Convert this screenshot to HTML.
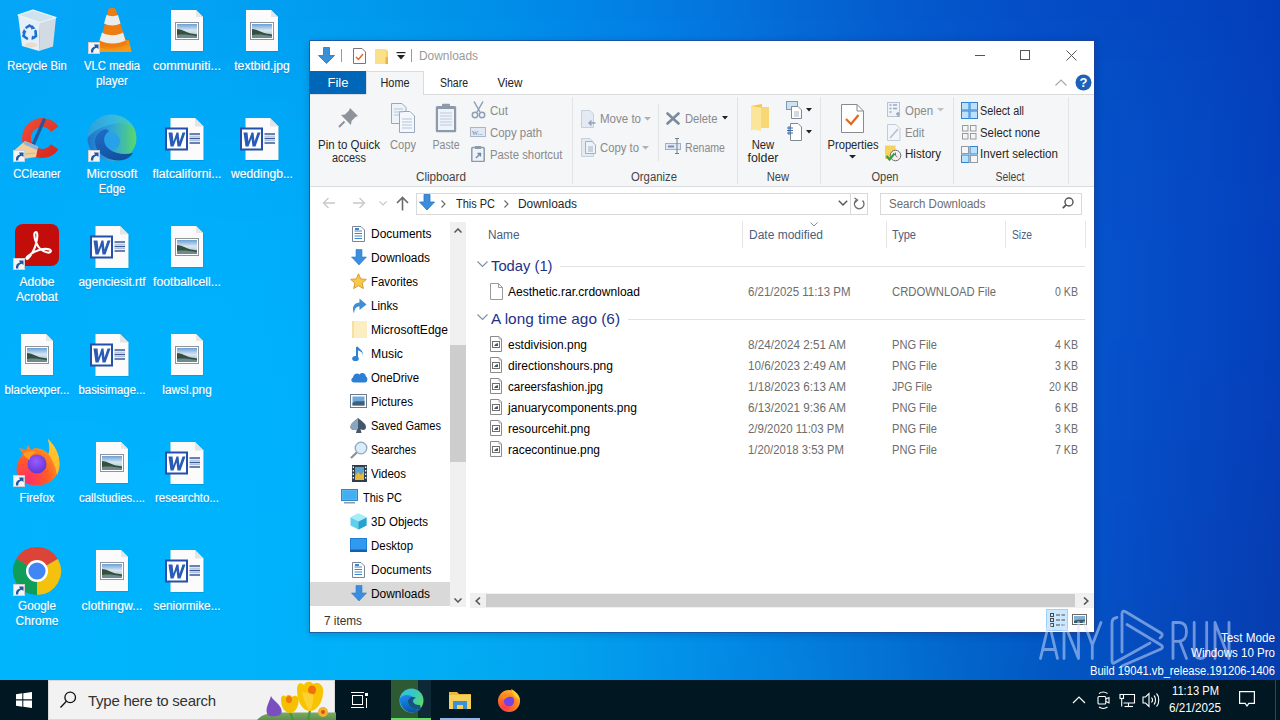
<!DOCTYPE html><html><head><meta charset="utf-8"><style>

html,body{margin:0;padding:0;}
body{width:1280px;height:720px;overflow:hidden;position:relative;font-family:"Liberation Sans", sans-serif;}
.a{position:absolute;}
.t{position:absolute;white-space:nowrap;}
.dl{color:#fff;text-shadow:0 0 1px rgba(255,255,255,.45),0 1px 1px rgba(0,40,90,.25);}

</style></head><body>
<div class="a" style="left:0px;top:0px;width:1280px;height:20px;background:linear-gradient(90deg,#05a5f7 0px,#04a5f7 80px,#03a4f5 160px,#02a0f2 240px,#019cef 320px,#0097eb 400px,#0090e9 480px,#0088e7 560px,#027ee3 640px,#0474dd 720px,#0468d4 800px,#045dce 880px,#0454ca 960px,#044dc6 1040px,#0349c3 1120px,#0344bf 1200px,#033dba 1280px);"></div>
<div class="a" style="left:0px;top:20px;width:1280px;height:20px;background:linear-gradient(90deg,#04a5f7 0px,#03a6f7 80px,#03a5f6 160px,#01a2f3 240px,#019ef0 320px,#0099ed 400px,#0092ea 480px,#0089e8 560px,#0280e5 640px,#0475de 720px,#0469d5 800px,#045ecf 880px,#0455cb 960px,#044ec7 1040px,#044ac3 1120px,#0345bf 1200px,#033eba 1280px);"></div>
<div class="a" style="left:0px;top:40px;width:1280px;height:20px;background:linear-gradient(90deg,#03a6f8 0px,#03a7f7 80px,#02a6f7 160px,#01a4f4 240px,#00a0f2 320px,#009aee 400px,#0093eb 480px,#008be9 560px,#0281e5 640px,#0477df 720px,#046bd6 800px,#045fd0 880px,#0456cb 960px,#0450c8 1040px,#044bc4 1120px,#0346c0 1200px,#033ebb 1280px);"></div>
<div class="a" style="left:0px;top:60px;width:1280px;height:20px;background:linear-gradient(90deg,#03a7f8 0px,#02a8f8 80px,#01a8f7 160px,#01a5f5 240px,#00a2f3 320px,#009cef 400px,#0095ed 480px,#008cea 560px,#0283e6 640px,#0478e0 720px,#046cd8 800px,#0461d1 880px,#0457cc 960px,#0451c8 1040px,#044dc5 1120px,#0447c0 1200px,#043ebb 1280px);"></div>
<div class="a" style="left:0px;top:80px;width:1280px;height:20px;background:linear-gradient(90deg,#02a8f8 0px,#01a9f8 80px,#00a9f8 160px,#00a7f6 240px,#00a4f4 320px,#009ef1 400px,#0096ee 480px,#008deb 560px,#0284e7 640px,#0479e1 720px,#046dd9 800px,#0462d2 880px,#0459cd 960px,#0452c9 1040px,#044ec5 1120px,#0447c1 1200px,#043fbb 1280px);"></div>
<div class="a" style="left:0px;top:100px;width:1280px;height:20px;background:linear-gradient(90deg,#02a8f8 0px,#01aaf8 80px,#00aaf8 160px,#00a9f7 240px,#00a5f5 320px,#009ff2 400px,#0097ef 480px,#008fec 560px,#0285e8 640px,#047ae1 720px,#046eda 800px,#0563d3 880px,#055ace 960px,#0453ca 1040px,#044ec6 1120px,#0448c1 1200px,#043fbb 1280px);"></div>
<div class="a" style="left:0px;top:120px;width:1280px;height:20px;background:linear-gradient(90deg,#02a9f9 0px,#00abf9 80px,#00abf9 160px,#00aaf8 240px,#00a6f6 320px,#00a0f3 400px,#0099f0 480px,#0090ed 560px,#0286e8 640px,#047be2 720px,#0470db 800px,#0565d4 880px,#055bcf 960px,#0554cb 1040px,#044fc7 1120px,#0448c2 1200px,#043fbb 1280px);"></div>
<div class="a" style="left:0px;top:140px;width:1280px;height:20px;background:linear-gradient(90deg,#01aaf9 0px,#00abf9 80px,#00acf9 160px,#00abf9 240px,#00a7f7 320px,#00a2f4 400px,#009af1 480px,#0191ed 560px,#0287e9 640px,#047ce3 720px,#0471dc 800px,#0566d6 880px,#055cd0 960px,#0555cc 1040px,#044fc7 1120px,#0448c2 1200px,#043fbc 1280px);"></div>
<div class="a" style="left:0px;top:160px;width:1280px;height:20px;background:linear-gradient(90deg,#01abfa 0px,#00acfa 80px,#00adfa 160px,#00acfa 240px,#00a9f8 320px,#00a3f5 400px,#009bf2 480px,#0192ee 560px,#0288ea 640px,#047de4 720px,#0472dd 800px,#0567d6 880px,#055ed1 960px,#0556cd 1040px,#0550c8 1120px,#0448c3 1200px,#043fbc 1280px);"></div>
<div class="a" style="left:0px;top:180px;width:1280px;height:20px;background:linear-gradient(90deg,#01acfa 0px,#00adfa 80px,#00aefa 160px,#00adfa 240px,#00a9f9 320px,#00a4f6 400px,#009cf2 480px,#0193ef 560px,#0289ea 640px,#047ee4 720px,#0473de 800px,#0568d7 880px,#055fd2 960px,#0557cd 1040px,#0550c9 1120px,#0548c3 1200px,#0440bc 1280px);"></div>
<div class="a" style="left:0px;top:200px;width:1280px;height:20px;background:linear-gradient(90deg,#01acfb 0px,#00aefb 80px,#00aefb 160px,#00adfb 240px,#00aaf9 320px,#00a5f6 400px,#009df3 480px,#0195ef 560px,#028beb 640px,#047fe5 720px,#0474de 800px,#0569d8 880px,#055fd3 960px,#0557ce 1040px,#0550c9 1120px,#0548c3 1200px,#0440bc 1280px);"></div>
<div class="a" style="left:0px;top:220px;width:1280px;height:20px;background:linear-gradient(90deg,#01adfb 0px,#00aefb 80px,#00affc 160px,#00aefb 240px,#00abfa 320px,#00a6f7 400px,#009ef4 480px,#0196f0 560px,#028beb 640px,#0480e5 720px,#0475df 800px,#056ad9 880px,#0560d4 960px,#0558cf 1040px,#0550ca 1120px,#0548c4 1200px,#043fbc 1280px);"></div>
<div class="a" style="left:0px;top:240px;width:1280px;height:20px;background:linear-gradient(90deg,#01aefb 0px,#00affc 80px,#00affc 160px,#00affc 240px,#00acfa 320px,#00a7f8 400px,#009ff4 480px,#0197f0 560px,#028cec 640px,#0481e6 720px,#0476e0 800px,#056bda 880px,#0561d4 960px,#0558cf 1040px,#0551ca 1120px,#0548c4 1200px,#043fbc 1280px);"></div>
<div class="a" style="left:0px;top:260px;width:1280px;height:20px;background:linear-gradient(90deg,#01aefc 0px,#00affc 80px,#00b0fc 160px,#00affc 240px,#00acfb 320px,#00a7f8 400px,#00a0f5 480px,#0197f1 560px,#028dec 640px,#0382e6 720px,#0477e0 800px,#056cda 880px,#0562d5 960px,#0559d0 1040px,#0551ca 1120px,#0548c4 1200px,#043fbb 1280px);"></div>
<div class="a" style="left:0px;top:280px;width:1280px;height:20px;background:linear-gradient(90deg,#01affc 0px,#00b0fc 80px,#00b0fd 160px,#00b0fd 240px,#00adfb 320px,#00a8f9 400px,#00a1f5 480px,#0198f1 560px,#028eec 640px,#0383e7 720px,#0478e1 800px,#056ddb 880px,#0562d5 960px,#0559d0 1040px,#0551ca 1120px,#0548c4 1200px,#043fbb 1280px);"></div>
<div class="a" style="left:0px;top:300px;width:1280px;height:20px;background:linear-gradient(90deg,#01affd 0px,#00b0fd 80px,#00b1fd 160px,#00b0fd 240px,#00aefb 320px,#00a9f9 400px,#01a2f5 480px,#0199f1 560px,#028fed 640px,#0384e7 720px,#0478e1 800px,#056ddb 880px,#0563d6 960px,#0559d0 1040px,#0551ca 1120px,#0548c4 1200px,#043fbb 1280px);"></div>
<div class="a" style="left:0px;top:320px;width:1280px;height:20px;background:linear-gradient(90deg,#01b0fd 0px,#00b0fd 80px,#00b1fe 160px,#00b1fd 240px,#00aefc 320px,#00a9f9 400px,#01a3f6 480px,#029af2 560px,#0290ed 640px,#0385e8 720px,#0479e2 800px,#056edc 880px,#0563d6 960px,#0559d0 1040px,#0551ca 1120px,#0548c3 1200px,#043fba 1280px);"></div>
<div class="a" style="left:0px;top:340px;width:1280px;height:20px;background:linear-gradient(90deg,#01b0fd 0px,#00b1fd 80px,#00b1fe 160px,#00b1fe 240px,#00affc 320px,#00aaf9 400px,#01a3f6 480px,#029bf2 560px,#0391ed 640px,#0386e8 720px,#047ae2 800px,#056edc 880px,#0563d6 960px,#055ad0 1040px,#0550ca 1120px,#0548c3 1200px,#043fba 1280px);"></div>
<div class="a" style="left:0px;top:360px;width:1280px;height:20px;background:linear-gradient(90deg,#01b0fe 0px,#00b1fe 80px,#00b2fe 160px,#00b1fe 240px,#00affc 320px,#00abf9 400px,#01a4f6 480px,#029cf2 560px,#0391ee 640px,#0386e8 720px,#047ae2 800px,#056fdc 880px,#0564d6 960px,#055ad0 1040px,#0550c9 1120px,#0547c2 1200px,#043eb9 1280px);"></div>
<div class="a" style="left:0px;top:380px;width:1280px;height:20px;background:linear-gradient(90deg,#01b0fe 0px,#01b1fe 80px,#00b2fe 160px,#00b2fe 240px,#00affc 320px,#00abfa 400px,#01a5f6 480px,#029cf2 560px,#0392ee 640px,#0387e8 720px,#047be2 800px,#046fdc 880px,#0564d6 960px,#055ad0 1040px,#0550c9 1120px,#0547c1 1200px,#053eb9 1280px);"></div>
<div class="a" style="left:0px;top:400px;width:1280px;height:20px;background:linear-gradient(90deg,#02b1fe 0px,#01b1fe 80px,#00b2fe 160px,#00b2fe 240px,#00b0fc 320px,#00acfa 400px,#01a5f6 480px,#029df2 560px,#0393ee 640px,#0387e9 720px,#047ce3 800px,#0470dc 880px,#0564d6 960px,#055ad0 1040px,#0550c8 1120px,#0547c0 1200px,#053eb8 1280px);"></div>
<div class="a" style="left:0px;top:420px;width:1280px;height:20px;background:linear-gradient(90deg,#02b1fe 0px,#01b2fe 80px,#00b2fe 160px,#00b2fe 240px,#00b0fc 320px,#01acfa 400px,#01a6f6 480px,#029ef2 560px,#0393ee 640px,#0388e9 720px,#047ce3 800px,#0470dc 880px,#0564d6 960px,#0559cf 1040px,#0550c8 1120px,#0547c0 1200px,#053eb7 1280px);"></div>
<div class="a" style="left:0px;top:440px;width:1280px;height:20px;background:linear-gradient(90deg,#02b1fe 0px,#01b2fe 80px,#00b2fe 160px,#00b2fe 240px,#00b0fc 320px,#01acf9 400px,#01a6f6 480px,#029ef2 560px,#0394ee 640px,#0389e9 720px,#047ce2 800px,#0470dc 880px,#0564d6 960px,#0559cf 1040px,#054fc7 1120px,#0546bf 1200px,#053eb7 1280px);"></div>
<div class="a" style="left:0px;top:460px;width:1280px;height:20px;background:linear-gradient(90deg,#02b1fe 0px,#01b2fe 80px,#00b3fe 160px,#00b2fe 240px,#00b1fc 320px,#01adf9 400px,#01a7f6 480px,#029ff2 560px,#0395ee 640px,#0389e9 720px,#047de2 800px,#0471dc 880px,#0464d5 960px,#0559cf 1040px,#054fc7 1120px,#0546be 1200px,#053eb6 1280px);"></div>
<div class="a" style="left:0px;top:480px;width:1280px;height:20px;background:linear-gradient(90deg,#02b2fe 0px,#01b2fe 80px,#00b3fe 160px,#00b3fe 240px,#00b1fc 320px,#01adf9 400px,#01a8f5 480px,#029ff2 560px,#0395ee 640px,#0389e9 720px,#047de2 800px,#0471db 880px,#0464d5 960px,#0559cf 1040px,#054fc7 1120px,#0546be 1200px,#053db5 1280px);"></div>
<div class="a" style="left:0px;top:500px;width:1280px;height:20px;background:linear-gradient(90deg,#02b2fe 0px,#01b2fe 80px,#00b3fe 160px,#00b3fd 240px,#00b1fc 320px,#01aef9 400px,#01a8f5 480px,#02a0f1 560px,#0296ee 640px,#038ae8 720px,#047ee2 800px,#0471db 880px,#0464d4 960px,#0559ce 1040px,#054ec7 1120px,#0546bd 1200px,#063db4 1280px);"></div>
<div class="a" style="left:0px;top:520px;width:1280px;height:20px;background:linear-gradient(90deg,#02b2fe 0px,#01b3fe 80px,#00b3fe 160px,#00b3fd 240px,#00b1fb 320px,#01aef8 400px,#01a9f5 480px,#02a1f1 560px,#0296ed 640px,#038ae8 720px,#037ee1 800px,#0471da 880px,#0465d3 960px,#0458cd 1040px,#054ec7 1120px,#0645bd 1200px,#063db4 1280px);"></div>
<div class="a" style="left:0px;top:540px;width:1280px;height:20px;background:linear-gradient(90deg,#02b2fe 0px,#01b3fe 80px,#00b3fd 160px,#00b3fd 240px,#00b1fb 320px,#01aef8 400px,#02a9f4 480px,#02a1f1 560px,#0296ed 640px,#038ae8 720px,#037ee1 800px,#0472d9 880px,#0465d2 960px,#0458cd 1040px,#054ec6 1120px,#0645bc 1200px,#063db3 1280px);"></div>
<div class="a" style="left:0px;top:560px;width:1280px;height:20px;background:linear-gradient(90deg,#02b3fe 0px,#01b3fd 80px,#00b3fd 160px,#00b3fc 240px,#00b1fb 320px,#01aef8 400px,#02a9f4 480px,#02a2f0 560px,#0297ed 640px,#038be8 720px,#037fe1 800px,#0372d9 880px,#0365d1 960px,#0458cc 1040px,#054ec5 1120px,#0645bb 1200px,#063db2 1280px);"></div>
<div class="a" style="left:0px;top:580px;width:1280px;height:20px;background:linear-gradient(90deg,#02b3fe 0px,#01b3fd 80px,#00b3fd 160px,#00b3fc 240px,#00b1fa 320px,#01aef7 400px,#02aaf3 480px,#02a2f0 560px,#0297ed 640px,#038be8 720px,#037fe0 800px,#0372d8 880px,#0365d0 960px,#0458ca 1040px,#054ec4 1120px,#0645ba 1200px,#063db1 1280px);"></div>
<div class="a" style="left:0px;top:600px;width:1280px;height:20px;background:linear-gradient(90deg,#02b4fe 0px,#01b4fd 80px,#00b4fc 160px,#00b3fc 240px,#00b1fa 320px,#01aff7 400px,#02aaf3 480px,#02a2ef 560px,#0297ec 640px,#028be7 720px,#037fdf 800px,#0372d7 880px,#0365cf 960px,#0358c9 1040px,#054ec2 1120px,#0645b9 1200px,#063db0 1280px);"></div>
<div class="a" style="left:0px;top:620px;width:1280px;height:20px;background:linear-gradient(90deg,#02b4fe 0px,#01b4fd 80px,#00b4fc 160px,#00b3fc 240px,#00b1fa 320px,#01aff6 400px,#02aaf2 480px,#02a3ee 560px,#0297ec 640px,#028be7 720px,#037fdf 800px,#0373d6 880px,#0265ce 960px,#0359c7 1040px,#044ec1 1120px,#0545b8 1200px,#063db0 1280px);"></div>
<div class="a" style="left:0px;top:640px;width:1280px;height:20px;background:linear-gradient(90deg,#01b5fd 0px,#01b4fc 80px,#00b4fc 160px,#00b3fb 240px,#00b1f9 320px,#01aff6 400px,#02aaf2 480px,#02a3ee 560px,#0297eb 640px,#028be7 720px,#037fde 800px,#0373d5 880px,#0265cc 960px,#0359c6 1040px,#044ec0 1120px,#0545b7 1200px,#063daf 1280px);"></div>
<div class="a" style="left:0px;top:660px;width:1280px;height:20px;background:linear-gradient(90deg,#01b5fd 0px,#00b5fc 80px,#00b4fb 160px,#00b3fb 240px,#00b1f9 320px,#01aff5 400px,#01aaf1 480px,#02a3ed 560px,#0297eb 640px,#028be6 720px,#0380dd 800px,#0373d4 880px,#0266cb 960px,#0259c4 1040px,#044fbe 1120px,#0546b6 1200px,#063dae 1280px);"></div>
<div class="a" style="left:0px;top:680px;width:1280px;height:20px;background:linear-gradient(90deg,#01b6fd 0px,#00b5fc 80px,#00b4fb 160px,#00b3fa 240px,#00b1f8 320px,#01aef5 400px,#01aaf1 480px,#02a2ed 560px,#0297ea 640px,#028be5 720px,#0280dd 800px,#0273d3 880px,#0266ca 960px,#025ac3 1040px,#044fbd 1120px,#0546b6 1200px,#063eae 1280px);"></div>
<div class="a" style="left:0px;top:700px;width:1280px;height:20px;background:linear-gradient(90deg,#01b6fd 0px,#00b5fc 80px,#00b4fb 160px,#00b3fa 240px,#00b1f8 320px,#01aef4 400px,#01aaf0 480px,#02a2ec 560px,#0297e9 640px,#028be4 720px,#0280dc 800px,#0273d2 880px,#0266ca 960px,#025ac2 1040px,#034fbc 1120px,#0546b5 1200px,#053ead 1280px);"></div>
<svg class="a" style="left:12px;top:5px" width="50" height="50" viewBox="0 0 50 50">
<path d="M6 10 L28 17.5 L27 46 L10 41Z" fill="#e4eff7"/>
<path d="M28 17.5 L44 12.5 L41 41.5 L27 46Z" fill="#d2dbe4"/>
<path d="M6 10 L21 5 L44 12.5 L28 17.5Z" fill="#cfe2ef" stroke="#eef7fc" stroke-width="1.3" stroke-linejoin="round"/>
<ellipse cx="19" cy="40" rx="6" ry="2.5" fill="#f3c9a6" opacity=".55"/>
<g fill="none" stroke="#1d6fd0" stroke-width="2.6" stroke-linecap="round">
<path d="M14.5 22.5 L17.5 20.5 L20.5 22.5"/><path d="M23.5 26 L24 31 L21 33"/><path d="M15 33.5 L11.5 31 L12.5 27"/>
</g>
<g fill="#1d6fd0"><path d="M20 20 L23.5 23.5 L19 24.5Z"/><path d="M19.5 35 L20 30.5 L23.5 33Z"/><path d="M10 28 L14.5 27 L12 24Z"/></g>
</svg>
<div class="t dl" style="left:-113px;width:300px;text-align:center;top:60.24px;font-size:12px;line-height:12px;color:#fff;transform:scaleX(0.9375);transform-origin:50% 0;">Recycle Bin</div>
<svg class="a" style="left:94px;top:7px" width="40" height="48" viewBox="0 0 40 48">
<defs><linearGradient id="vb" x1="0" y1="0" x2="1" y2="1"><stop offset="0" stop-color="#e8700a"/><stop offset="1" stop-color="#f6a21a"/></linearGradient></defs>
<path d="M5 33 H35 L37.5 45 H2Z" fill="url(#vb)"/>
<path d="M4 39 C10 44 30 44 36 39 L37.5 45 H2Z" fill="#f39a1c"/>
<path d="M14.5 2 C16 0.8 20 0.8 21.5 2 L33 37 C27 41.5 12 41.5 6 37Z" fill="#ee7d10"/>
<path d="M12.5 8 C16 9.5 21 9.5 24 8 L26.5 16.5 C21.5 19 15 19 10 16.5Z" fill="#ececec"/>
<path d="M8 25.5 C14 29 23 29 29 25.5 L31.5 33.5 C24 37.5 13 37.5 5.5 33.5Z" fill="#ececec"/>
</svg>
<svg class="a" style="left:88px;top:42px" width="12" height="12" viewBox="0 0 12 12"><rect x="0" y="0" width="12" height="12" fill="#f4f4f4"/><rect x="0.5" y="0.5" width="11" height="11" fill="none" stroke="#d0d0d0"/><path d="M3 10.5 C2.5 7 4 5 7 4.5 L6 2.5 L10.5 2.5 L10.5 7 L8.8 5.8 C6.5 6.3 5 8 5.2 10.5Z" fill="#1f58a8"/></svg>
<div class="t dl" style="left:-38px;width:300px;text-align:center;top:60.24px;font-size:12px;line-height:12px;color:#fff;transform:scaleX(0.9432);transform-origin:50% 0;">VLC media</div>
<div class="t dl" style="left:-38px;width:300px;text-align:center;top:75.24px;font-size:12px;line-height:12px;color:#fff;transform:scaleX(0.9790);transform-origin:50% 0;">player</div>
<svg class="a" style="left:170px;top:9px" width="35" height="44" viewBox="0 0 35 44">
<path d="M1 1 H26 L33 8 V42 H1Z" fill="#000" opacity=".12" transform="translate(0.6,0.8)"/>
<path d="M1 1 H26 L33 8 V42 H1Z" fill="#fbfbfb"/>
<path d="M26 1 V8 H33Z" fill="#e6e6e6"/>
<rect x="5.5" y="13.5" width="23" height="17" fill="#fff" stroke="#8e9499"/>
<defs><linearGradient id="pg" x1="0" y1="0" x2="0" y2="1"><stop offset="0" stop-color="#6a9fd6"/><stop offset=".45" stop-color="#d7e6f2"/><stop offset="1" stop-color="#9fb7c4"/></linearGradient></defs>
<rect x="7" y="15" width="20" height="14" fill="url(#pg)"/>
<path d="M7 20 C11 20 16 23 21 24.5 C24 25 26 25 27 25.5 V29 H7Z" fill="#34503a"/>
<path d="M7 26 C12 25 20 26 27 27 V29 H7Z" fill="#6d8a92"/>
</svg>
<div class="t dl" style="left:37px;width:300px;text-align:center;top:60.24px;font-size:12px;line-height:12px;color:#fff;transform:scaleX(1.0512);transform-origin:50% 0;">communiti...</div>
<svg class="a" style="left:245px;top:9px" width="35" height="44" viewBox="0 0 35 44">
<path d="M1 1 H26 L33 8 V42 H1Z" fill="#000" opacity=".12" transform="translate(0.6,0.8)"/>
<path d="M1 1 H26 L33 8 V42 H1Z" fill="#fbfbfb"/>
<path d="M26 1 V8 H33Z" fill="#e6e6e6"/>
<rect x="5.5" y="13.5" width="23" height="17" fill="#fff" stroke="#8e9499"/>
<defs><linearGradient id="pg" x1="0" y1="0" x2="0" y2="1"><stop offset="0" stop-color="#6a9fd6"/><stop offset=".45" stop-color="#d7e6f2"/><stop offset="1" stop-color="#9fb7c4"/></linearGradient></defs>
<rect x="7" y="15" width="20" height="14" fill="url(#pg)"/>
<path d="M7 20 C11 20 16 23 21 24.5 C24 25 26 25 27 25.5 V29 H7Z" fill="#34503a"/>
<path d="M7 26 C12 25 20 26 27 27 V29 H7Z" fill="#6d8a92"/>
</svg>
<div class="t dl" style="left:112px;width:300px;text-align:center;top:60.24px;font-size:12px;line-height:12px;color:#fff;transform:scaleX(1.0146);transform-origin:50% 0;">textbid.jpg</div>
<svg class="a" style="left:13px;top:113px" width="50" height="50" viewBox="0 0 50 50">
<defs><linearGradient id="cc" x1="0" y1="0" x2="1" y2="1"><stop offset="0" stop-color="#f0503a"/><stop offset="1" stop-color="#d3231c"/></linearGradient></defs>
<path d="M45.4 13.5 A20 20 0 1 0 45.4 36.5 L38 31.3 A11 11 0 1 1 38 18.7 Z" fill="url(#cc)"/>
<path d="M31 7 L20.5 31" stroke="#24589e" stroke-width="3.2" stroke-linecap="round"/>
<path d="M0.5 38 L12 28 L25 33.5 L23 44 L6 46.5Z" fill="#f1cf9c"/>
<path d="M12 28 L25 33.5 L23.5 37 L10.5 31Z" fill="#8fb5d8"/>
<path d="M4 42 L22 40" stroke="#e2b27c" stroke-width="1.2"/>
</svg>
<svg class="a" style="left:13px;top:150px" width="12" height="12" viewBox="0 0 12 12"><rect x="0" y="0" width="12" height="12" fill="#f4f4f4"/><rect x="0.5" y="0.5" width="11" height="11" fill="none" stroke="#d0d0d0"/><path d="M3 10.5 C2.5 7 4 5 7 4.5 L6 2.5 L10.5 2.5 L10.5 7 L8.8 5.8 C6.5 6.3 5 8 5.2 10.5Z" fill="#1f58a8"/></svg>
<div class="t dl" style="left:-113px;width:300px;text-align:center;top:168.24px;font-size:12px;line-height:12px;color:#fff;transform:scaleX(0.9368);transform-origin:50% 0;">CCleaner</div>
<svg class="a" style="left:87px;top:114px" width="50" height="48" viewBox="0 0 50 48">
<defs><linearGradient id="e1" x1="0" y1="0" x2="1" y2="0"><stop offset="0" stop-color="#1e74cc"/><stop offset=".5" stop-color="#2fa6dc"/><stop offset="1" stop-color="#5ad868"/></linearGradient>
<linearGradient id="e2" x1="0" y1="0" x2="0.6" y2="1"><stop offset="0" stop-color="#1f6fc8"/><stop offset="1" stop-color="#134f9e"/></linearGradient></defs>
<ellipse cx="25" cy="24" rx="24.5" ry="23.5" fill="url(#e1)"/>
<path d="M0.5 24 C0.5 12 10 1 24 0.5 C34 0.5 43 6 47 14 C40 9 30 8 22 11 C12 14 4 19 0.5 24Z" fill="#3cc4e6" opacity=".55"/>
<path d="M14 31 C14 22 20 18 26 19 C30 20 33 23 33 27 C33 33 28 37 22 36 C18 35.5 15 34 14 31Z" fill="#27a2ea"/>
<path d="M19 15 C10 17 6 25 9 33 C13 43 26 48 36 46 C41 45 44 42 46 39 C38 41 28 40 22 35 C16 30 15 22 22 17Z" fill="url(#e2)"/>
</svg>
<svg class="a" style="left:88px;top:150px" width="12" height="12" viewBox="0 0 12 12"><rect x="0" y="0" width="12" height="12" fill="#f4f4f4"/><rect x="0.5" y="0.5" width="11" height="11" fill="none" stroke="#d0d0d0"/><path d="M3 10.5 C2.5 7 4 5 7 4.5 L6 2.5 L10.5 2.5 L10.5 7 L8.8 5.8 C6.5 6.3 5 8 5.2 10.5Z" fill="#1f58a8"/></svg>
<div class="t dl" style="left:-38px;width:300px;text-align:center;top:168.24px;font-size:12px;line-height:12px;color:#fff;transform:scaleX(1.0475);transform-origin:50% 0;">Microsoft</div>
<div class="t dl" style="left:-38px;width:300px;text-align:center;top:183.24px;font-size:12px;line-height:12px;color:#fff;transform:scaleX(0.9454);transform-origin:50% 0;">Edge</div>
<svg class="a" style="left:165px;top:117px" width="40" height="45" viewBox="0 0 40 45">
<path d="M5.5 1 H30 L38.5 9.5 V43 H5.5Z" fill="#000" opacity=".12" transform="translate(0.6,0.8)"/>
<path d="M5.5 1 H30 L38.5 9.5 V43 H5.5Z" fill="#fbfbfb"/>
<path d="M30 1 V9.5 H38.5Z" fill="#e4e4e4"/>
<rect x="1" y="11.5" width="21" height="21" fill="#fff" stroke="#2350a8" stroke-width="2"/>
<path d="M3.5 15.5 H7.5 L8.5 24.5 L11.5 15.5 H13.5 L14.5 24.5 L17.5 15.5 H20.5 L15.5 29.5 H12.5 L11.5 21.5 L8.5 29.5 H5.5Z" fill="#2a5bb6"/>
<path d="M24.5 17 H35 M24.5 21.5 H35 M24.5 26 H35" stroke="#3a5a9a" stroke-width="1.3"/>
<path d="M24.5 19.2 H35 M24.5 23.7 H35" stroke="#9db0d0" stroke-width="1"/>
</svg>
<div class="t dl" style="left:37px;width:300px;text-align:center;top:168.24px;font-size:12px;line-height:12px;color:#fff;transform:scaleX(1.0244);transform-origin:50% 0;">flatcaliforni...</div>
<svg class="a" style="left:240px;top:117px" width="40" height="45" viewBox="0 0 40 45">
<path d="M5.5 1 H30 L38.5 9.5 V43 H5.5Z" fill="#000" opacity=".12" transform="translate(0.6,0.8)"/>
<path d="M5.5 1 H30 L38.5 9.5 V43 H5.5Z" fill="#fbfbfb"/>
<path d="M30 1 V9.5 H38.5Z" fill="#e4e4e4"/>
<rect x="1" y="11.5" width="21" height="21" fill="#fff" stroke="#2350a8" stroke-width="2"/>
<path d="M3.5 15.5 H7.5 L8.5 24.5 L11.5 15.5 H13.5 L14.5 24.5 L17.5 15.5 H20.5 L15.5 29.5 H12.5 L11.5 21.5 L8.5 29.5 H5.5Z" fill="#2a5bb6"/>
<path d="M24.5 17 H35 M24.5 21.5 H35 M24.5 26 H35" stroke="#3a5a9a" stroke-width="1.3"/>
<path d="M24.5 19.2 H35 M24.5 23.7 H35" stroke="#9db0d0" stroke-width="1"/>
</svg>
<div class="t dl" style="left:112px;width:300px;text-align:center;top:168.24px;font-size:12px;line-height:12px;color:#fff;transform:scaleX(1.0099);transform-origin:50% 0;">weddingb...</div>
<svg class="a" style="left:15px;top:224px" width="44" height="42" viewBox="0 0 44 42">
<rect x="0" y="0" width="44" height="42" rx="8" fill="#c20d0a"/>
<path d="M21 8 C18.5 8 19 13.5 21 18 C23 23.5 27 27.5 32.5 28.5 C36 29 37 26.5 34.5 25.5 C29.5 23.5 19 26.5 12.5 32.5 C10.5 34.5 11.5 36 13.5 34 C18 29 21 21.5 22 15 C22.8 10 22 8 21 8Z" fill="none" stroke="#fff" stroke-width="2.1" stroke-linejoin="round"/>
</svg>
<svg class="a" style="left:13px;top:258px" width="12" height="12" viewBox="0 0 12 12"><rect x="0" y="0" width="12" height="12" fill="#f4f4f4"/><rect x="0.5" y="0.5" width="11" height="11" fill="none" stroke="#d0d0d0"/><path d="M3 10.5 C2.5 7 4 5 7 4.5 L6 2.5 L10.5 2.5 L10.5 7 L8.8 5.8 C6.5 6.3 5 8 5.2 10.5Z" fill="#1f58a8"/></svg>
<div class="t dl" style="left:-113px;width:300px;text-align:center;top:276.44px;font-size:12px;line-height:12px;color:#fff;transform:scaleX(1.0086);transform-origin:50% 0;">Adobe</div>
<div class="t dl" style="left:-113px;width:300px;text-align:center;top:291.44px;font-size:12px;line-height:12px;color:#fff;transform:scaleX(1.0155);transform-origin:50% 0;">Acrobat</div>
<svg class="a" style="left:90px;top:225px" width="40" height="45" viewBox="0 0 40 45">
<path d="M5.5 1 H30 L38.5 9.5 V43 H5.5Z" fill="#000" opacity=".12" transform="translate(0.6,0.8)"/>
<path d="M5.5 1 H30 L38.5 9.5 V43 H5.5Z" fill="#fbfbfb"/>
<path d="M30 1 V9.5 H38.5Z" fill="#e4e4e4"/>
<rect x="1" y="11.5" width="21" height="21" fill="#fff" stroke="#2350a8" stroke-width="2"/>
<path d="M3.5 15.5 H7.5 L8.5 24.5 L11.5 15.5 H13.5 L14.5 24.5 L17.5 15.5 H20.5 L15.5 29.5 H12.5 L11.5 21.5 L8.5 29.5 H5.5Z" fill="#2a5bb6"/>
<path d="M24.5 17 H35 M24.5 21.5 H35 M24.5 26 H35" stroke="#3a5a9a" stroke-width="1.3"/>
<path d="M24.5 19.2 H35 M24.5 23.7 H35" stroke="#9db0d0" stroke-width="1"/>
</svg>
<div class="t dl" style="left:-38px;width:300px;text-align:center;top:276.44px;font-size:12px;line-height:12px;color:#fff;transform:scaleX(0.9846);transform-origin:50% 0;">agenciesit.rtf</div>
<svg class="a" style="left:170px;top:225px" width="35" height="44" viewBox="0 0 35 44">
<path d="M1 1 H26 L33 8 V42 H1Z" fill="#000" opacity=".12" transform="translate(0.6,0.8)"/>
<path d="M1 1 H26 L33 8 V42 H1Z" fill="#fbfbfb"/>
<path d="M26 1 V8 H33Z" fill="#e6e6e6"/>
<rect x="5.5" y="13.5" width="23" height="17" fill="#fff" stroke="#8e9499"/>
<defs><linearGradient id="pg" x1="0" y1="0" x2="0" y2="1"><stop offset="0" stop-color="#6a9fd6"/><stop offset=".45" stop-color="#d7e6f2"/><stop offset="1" stop-color="#9fb7c4"/></linearGradient></defs>
<rect x="7" y="15" width="20" height="14" fill="url(#pg)"/>
<path d="M7 20 C11 20 16 23 21 24.5 C24 25 26 25 27 25.5 V29 H7Z" fill="#34503a"/>
<path d="M7 26 C12 25 20 26 27 27 V29 H7Z" fill="#6d8a92"/>
</svg>
<div class="t dl" style="left:37px;width:300px;text-align:center;top:276.44px;font-size:12px;line-height:12px;color:#fff;transform:scaleX(1.0194);transform-origin:50% 0;">footballcell...</div>
<svg class="a" style="left:20px;top:333px" width="35" height="44" viewBox="0 0 35 44">
<path d="M1 1 H26 L33 8 V42 H1Z" fill="#000" opacity=".12" transform="translate(0.6,0.8)"/>
<path d="M1 1 H26 L33 8 V42 H1Z" fill="#fbfbfb"/>
<path d="M26 1 V8 H33Z" fill="#e6e6e6"/>
<rect x="5.5" y="13.5" width="23" height="17" fill="#fff" stroke="#8e9499"/>
<defs><linearGradient id="pg" x1="0" y1="0" x2="0" y2="1"><stop offset="0" stop-color="#6a9fd6"/><stop offset=".45" stop-color="#d7e6f2"/><stop offset="1" stop-color="#9fb7c4"/></linearGradient></defs>
<rect x="7" y="15" width="20" height="14" fill="url(#pg)"/>
<path d="M7 20 C11 20 16 23 21 24.5 C24 25 26 25 27 25.5 V29 H7Z" fill="#34503a"/>
<path d="M7 26 C12 25 20 26 27 27 V29 H7Z" fill="#6d8a92"/>
</svg>
<div class="t dl" style="left:-113px;width:300px;text-align:center;top:384.44px;font-size:12px;line-height:12px;color:#fff;transform:scaleX(0.9647);transform-origin:50% 0;">blackexper...</div>
<svg class="a" style="left:90px;top:333px" width="40" height="45" viewBox="0 0 40 45">
<path d="M5.5 1 H30 L38.5 9.5 V43 H5.5Z" fill="#000" opacity=".12" transform="translate(0.6,0.8)"/>
<path d="M5.5 1 H30 L38.5 9.5 V43 H5.5Z" fill="#fbfbfb"/>
<path d="M30 1 V9.5 H38.5Z" fill="#e4e4e4"/>
<rect x="1" y="11.5" width="21" height="21" fill="#fff" stroke="#2350a8" stroke-width="2"/>
<path d="M3.5 15.5 H7.5 L8.5 24.5 L11.5 15.5 H13.5 L14.5 24.5 L17.5 15.5 H20.5 L15.5 29.5 H12.5 L11.5 21.5 L8.5 29.5 H5.5Z" fill="#2a5bb6"/>
<path d="M24.5 17 H35 M24.5 21.5 H35 M24.5 26 H35" stroke="#3a5a9a" stroke-width="1.3"/>
<path d="M24.5 19.2 H35 M24.5 23.7 H35" stroke="#9db0d0" stroke-width="1"/>
</svg>
<div class="t dl" style="left:-38px;width:300px;text-align:center;top:384.44px;font-size:12px;line-height:12px;color:#fff;transform:scaleX(0.9476);transform-origin:50% 0;">basisimage...</div>
<svg class="a" style="left:170px;top:333px" width="35" height="44" viewBox="0 0 35 44">
<path d="M1 1 H26 L33 8 V42 H1Z" fill="#000" opacity=".12" transform="translate(0.6,0.8)"/>
<path d="M1 1 H26 L33 8 V42 H1Z" fill="#fbfbfb"/>
<path d="M26 1 V8 H33Z" fill="#e6e6e6"/>
<rect x="5.5" y="13.5" width="23" height="17" fill="#fff" stroke="#8e9499"/>
<defs><linearGradient id="pg" x1="0" y1="0" x2="0" y2="1"><stop offset="0" stop-color="#6a9fd6"/><stop offset=".45" stop-color="#d7e6f2"/><stop offset="1" stop-color="#9fb7c4"/></linearGradient></defs>
<rect x="7" y="15" width="20" height="14" fill="url(#pg)"/>
<path d="M7 20 C11 20 16 23 21 24.5 C24 25 26 25 27 25.5 V29 H7Z" fill="#34503a"/>
<path d="M7 26 C12 25 20 26 27 27 V29 H7Z" fill="#6d8a92"/>
</svg>
<div class="t dl" style="left:37px;width:300px;text-align:center;top:384.44px;font-size:12px;line-height:12px;color:#fff;transform:scaleX(0.9894);transform-origin:50% 0;">lawsl.png</div>
<svg class="a" style="left:13px;top:437px" width="48" height="50" viewBox="0 0 48 50">
<defs><radialGradient id="f1" cx="0.25" cy="0.9" r="1.05"><stop offset="0" stop-color="#ff2d6a"/><stop offset=".45" stop-color="#ff5a28"/><stop offset=".8" stop-color="#ff9a1e"/><stop offset="1" stop-color="#ffd83a"/></radialGradient>
<radialGradient id="f2" cx="0.45" cy="0.35" r="0.75"><stop offset="0" stop-color="#9a5cff"/><stop offset="1" stop-color="#5a2fd0"/></radialGradient></defs>
<path d="M6 11 L10 17 C5 23 2.5 29 4 36 C7 45 15 48.5 24 48.5 C37 48.5 46.5 39 46.5 27 C46.5 17 42 9 35 2 C36.5 8 37 13 35.5 17 C32 13 27 11 22 11 L18.5 13 L15 8.5 L13 13Z" fill="url(#f1)"/>
<path d="M35 2 C42 9 46.5 17 46.5 27 C46.5 31 45.5 35 44 38 C43 30 40 24 35.5 17 C37 13 36.5 8 35 2Z" fill="#ffc82e" opacity=".85"/>
<circle cx="24" cy="27" r="9.5" fill="url(#f2)"/>
<path d="M10 17 C13 14 19 13 23 15.5 C19 17 17 19.5 16.5 23 C14 21.5 11.5 19.5 10 17Z" fill="#ff9a22"/>
</svg>
<svg class="a" style="left:13px;top:475px" width="12" height="12" viewBox="0 0 12 12"><rect x="0" y="0" width="12" height="12" fill="#f4f4f4"/><rect x="0.5" y="0.5" width="11" height="11" fill="none" stroke="#d0d0d0"/><path d="M3 10.5 C2.5 7 4 5 7 4.5 L6 2.5 L10.5 2.5 L10.5 7 L8.8 5.8 C6.5 6.3 5 8 5.2 10.5Z" fill="#1f58a8"/></svg>
<div class="t dl" style="left:-113px;width:300px;text-align:center;top:492.44px;font-size:12px;line-height:12px;color:#fff;transform:scaleX(0.9540);transform-origin:50% 0;">Firefox</div>
<svg class="a" style="left:95px;top:441px" width="35" height="44" viewBox="0 0 35 44">
<path d="M1 1 H26 L33 8 V42 H1Z" fill="#000" opacity=".12" transform="translate(0.6,0.8)"/>
<path d="M1 1 H26 L33 8 V42 H1Z" fill="#fbfbfb"/>
<path d="M26 1 V8 H33Z" fill="#e6e6e6"/>
<rect x="5.5" y="13.5" width="23" height="17" fill="#fff" stroke="#8e9499"/>
<defs><linearGradient id="pg" x1="0" y1="0" x2="0" y2="1"><stop offset="0" stop-color="#6a9fd6"/><stop offset=".45" stop-color="#d7e6f2"/><stop offset="1" stop-color="#9fb7c4"/></linearGradient></defs>
<rect x="7" y="15" width="20" height="14" fill="url(#pg)"/>
<path d="M7 20 C11 20 16 23 21 24.5 C24 25 26 25 27 25.5 V29 H7Z" fill="#34503a"/>
<path d="M7 26 C12 25 20 26 27 27 V29 H7Z" fill="#6d8a92"/>
</svg>
<div class="t dl" style="left:-38px;width:300px;text-align:center;top:492.44px;font-size:12px;line-height:12px;color:#fff;transform:scaleX(0.9514);transform-origin:50% 0;">callstudies....</div>
<svg class="a" style="left:165px;top:441px" width="40" height="45" viewBox="0 0 40 45">
<path d="M5.5 1 H30 L38.5 9.5 V43 H5.5Z" fill="#000" opacity=".12" transform="translate(0.6,0.8)"/>
<path d="M5.5 1 H30 L38.5 9.5 V43 H5.5Z" fill="#fbfbfb"/>
<path d="M30 1 V9.5 H38.5Z" fill="#e4e4e4"/>
<rect x="1" y="11.5" width="21" height="21" fill="#fff" stroke="#2350a8" stroke-width="2"/>
<path d="M3.5 15.5 H7.5 L8.5 24.5 L11.5 15.5 H13.5 L14.5 24.5 L17.5 15.5 H20.5 L15.5 29.5 H12.5 L11.5 21.5 L8.5 29.5 H5.5Z" fill="#2a5bb6"/>
<path d="M24.5 17 H35 M24.5 21.5 H35 M24.5 26 H35" stroke="#3a5a9a" stroke-width="1.3"/>
<path d="M24.5 19.2 H35 M24.5 23.7 H35" stroke="#9db0d0" stroke-width="1"/>
</svg>
<div class="t dl" style="left:37px;width:300px;text-align:center;top:492.44px;font-size:12px;line-height:12px;color:#fff;transform:scaleX(0.9595);transform-origin:50% 0;">researchto...</div>
<svg class="a" style="left:12px;top:546px" width="50" height="50" viewBox="0 0 50 50">
<path d="M25 25 L4.2 13 A24 24 0 0 1 45.8 13Z" fill="#db4437"/>
<path d="M25 25 L45.8 13 A24 24 0 0 1 25 49Z" fill="#f4c20d"/>
<path d="M25 25 L25 49 A24 24 0 0 1 4.2 13Z" fill="#0f9d58"/>
<circle cx="25" cy="25" r="11" fill="#fff"/>
<circle cx="25" cy="25" r="8.6" fill="#4285f4"/>
</svg>
<svg class="a" style="left:13px;top:584px" width="12" height="12" viewBox="0 0 12 12"><rect x="0" y="0" width="12" height="12" fill="#f4f4f4"/><rect x="0.5" y="0.5" width="11" height="11" fill="none" stroke="#d0d0d0"/><path d="M3 10.5 C2.5 7 4 5 7 4.5 L6 2.5 L10.5 2.5 L10.5 7 L8.8 5.8 C6.5 6.3 5 8 5.2 10.5Z" fill="#1f58a8"/></svg>
<div class="t dl" style="left:-113px;width:300px;text-align:center;top:600.44px;font-size:12px;line-height:12px;color:#fff;transform:scaleX(0.9818);transform-origin:50% 0;">Google</div>
<div class="t dl" style="left:-113px;width:300px;text-align:center;top:615.44px;font-size:12px;line-height:12px;color:#fff;transform:scaleX(1.0073);transform-origin:50% 0;">Chrome</div>
<svg class="a" style="left:95px;top:549px" width="35" height="44" viewBox="0 0 35 44">
<path d="M1 1 H26 L33 8 V42 H1Z" fill="#000" opacity=".12" transform="translate(0.6,0.8)"/>
<path d="M1 1 H26 L33 8 V42 H1Z" fill="#fbfbfb"/>
<path d="M26 1 V8 H33Z" fill="#e6e6e6"/>
<rect x="5.5" y="13.5" width="23" height="17" fill="#fff" stroke="#8e9499"/>
<defs><linearGradient id="pg" x1="0" y1="0" x2="0" y2="1"><stop offset="0" stop-color="#6a9fd6"/><stop offset=".45" stop-color="#d7e6f2"/><stop offset="1" stop-color="#9fb7c4"/></linearGradient></defs>
<rect x="7" y="15" width="20" height="14" fill="url(#pg)"/>
<path d="M7 20 C11 20 16 23 21 24.5 C24 25 26 25 27 25.5 V29 H7Z" fill="#34503a"/>
<path d="M7 26 C12 25 20 26 27 27 V29 H7Z" fill="#6d8a92"/>
</svg>
<div class="t dl" style="left:-38px;width:300px;text-align:center;top:600.44px;font-size:12px;line-height:12px;color:#fff;transform:scaleX(1.0274);transform-origin:50% 0;">clothingw...</div>
<svg class="a" style="left:165px;top:549px" width="40" height="45" viewBox="0 0 40 45">
<path d="M5.5 1 H30 L38.5 9.5 V43 H5.5Z" fill="#000" opacity=".12" transform="translate(0.6,0.8)"/>
<path d="M5.5 1 H30 L38.5 9.5 V43 H5.5Z" fill="#fbfbfb"/>
<path d="M30 1 V9.5 H38.5Z" fill="#e4e4e4"/>
<rect x="1" y="11.5" width="21" height="21" fill="#fff" stroke="#2350a8" stroke-width="2"/>
<path d="M3.5 15.5 H7.5 L8.5 24.5 L11.5 15.5 H13.5 L14.5 24.5 L17.5 15.5 H20.5 L15.5 29.5 H12.5 L11.5 21.5 L8.5 29.5 H5.5Z" fill="#2a5bb6"/>
<path d="M24.5 17 H35 M24.5 21.5 H35 M24.5 26 H35" stroke="#3a5a9a" stroke-width="1.3"/>
<path d="M24.5 19.2 H35 M24.5 23.7 H35" stroke="#9db0d0" stroke-width="1"/>
</svg>
<div class="t dl" style="left:37px;width:300px;text-align:center;top:600.44px;font-size:12px;line-height:12px;color:#fff;transform:scaleX(0.9848);transform-origin:50% 0;">seniormike...</div>
<div class="a" style="left:309px;top:40px;width:786px;height:593px;box-shadow:0 2px 8px rgba(0,20,50,.2);"></div>
<div class="a" style="left:310px;top:41px;width:784px;height:591px;background:#fff;"></div>
<div class="a" style="left:309px;top:40px;width:786px;height:593px;box-sizing:border-box;border:1px solid rgba(37,62,138,.7);"></div>
<svg class="a" style="left:318px;top:47px" width="17" height="17" viewBox="0 0 17 17"><path d="M5.5 0.5 H11.5 V8.5 H16.5 L8.5 16.5 L0.5 8.5 H5.5Z" fill="#3a8fd9" stroke="#2a6fb8" stroke-width="0.8"/></svg>
<div class="a" style="left:341px;top:49px;width:1px;height:13px;background:#9a9a9a;"></div>
<svg class="a" style="left:353px;top:48px" width="13" height="16" viewBox="0 0 13 16"><path d="M0.5 0.5 H9 L12.5 4 V15.5 H0.5Z" fill="#fff" stroke="#777" stroke-width="1"/><path d="M3 9 L5.5 11.5 L10 6" fill="none" stroke="#e06a2a" stroke-width="1.5"/></svg>
<svg class="a" style="left:375px;top:48px" width="14" height="17" viewBox="0 0 14 17"><path d="M0 1 H10 L13 3 V16 H0Z" fill="#f8d46a"/><rect x="0" y="1" width="11" height="15" fill="#fbe08a"/><rect x="10.5" y="9" width="2.5" height="7" fill="#e6b640"/></svg>
<svg class="a" style="left:396px;top:52px" width="10" height="8" viewBox="0 0 10 8"><rect x="0.5" y="0" width="9" height="1.2" fill="#222"/><path d="M1 3 H9 L5 7.5Z" fill="#222"/></svg>
<div class="a" style="left:411px;top:49px;width:1px;height:13px;background:#9a9a9a;"></div>
<div class="t " style="left:419px;top:49.84px;font-size:12px;line-height:12px;color:#9a9a9a;transform:scaleX(0.9937);transform-origin:0 0;">Downloads</div>
<div class="a" style="left:975px;top:55px;width:10px;height:1px;background:#555;"></div>
<div class="a" style="left:1020px;top:50px;width:10px;height:10px;box-sizing:border-box;border:1px solid #555;"></div>
<svg class="a" style="left:1066px;top:50px" width="11" height="11" viewBox="0 0 11 11"><path d="M0.5 0.5 L10.5 10.5 M10.5 0.5 L0.5 10.5" stroke="#555" stroke-width="1"/></svg>
<div class="a" style="left:310px;top:71px;width:56px;height:23px;background:#0066b8;"></div>
<div class="t " style="left:188px;width:300px;text-align:center;top:76.84px;font-size:12px;line-height:12px;color:#fff;transform:scaleX(1.0856);transform-origin:50% 0;">File</div>
<div class="a" style="left:366px;top:71px;width:58px;height:24px;background:#f4f6f8;box-sizing:border-box;border:1px solid #dadbdc;border-bottom:none;"></div>
<div class="t " style="left:245px;width:300px;text-align:center;top:76.84px;font-size:12px;line-height:12px;color:#222;transform:scaleX(0.9058);transform-origin:50% 0;">Home</div>
<div class="t " style="left:304px;width:300px;text-align:center;top:76.84px;font-size:12px;line-height:12px;color:#222;transform:scaleX(0.8741);transform-origin:50% 0;">Share</div>
<div class="t " style="left:360px;width:300px;text-align:center;top:76.84px;font-size:12px;line-height:12px;color:#222;transform:scaleX(0.9691);transform-origin:50% 0;">View</div>
<svg class="a" style="left:1055px;top:79px" width="12" height="7" viewBox="0 0 12 7"><path d="M0.5 6.5 L6 1 L11.5 6.5" fill="none" stroke="#a8a8a8" stroke-width="1.2"/></svg>
<svg class="a" style="left:1075px;top:74px" width="17" height="17" viewBox="0 0 17 17"><circle cx="8.5" cy="8.5" r="8" fill="#1b62b8"/><text x="8.5" y="13.2" text-anchor="middle" font-family="Liberation Sans" font-weight="bold" font-size="13" fill="#fff">?</text></svg>
<div class="a" style="left:310px;top:94px;width:784px;height:93px;background:#f4f6f8;border-top:1px solid #dadbdc;border-bottom:1px solid #dadbdc;box-sizing:border-box;"></div>
<div class="a" style="left:366px;top:94px;width:57px;height:1px;background:#f4f6f8;"></div>
<div class="a" style="left:572px;top:97px;width:1px;height:87px;background:#e2e3e4;"></div>
<div class="a" style="left:737px;top:97px;width:1px;height:87px;background:#e2e3e4;"></div>
<div class="a" style="left:820px;top:97px;width:1px;height:87px;background:#e2e3e4;"></div>
<div class="a" style="left:953px;top:97px;width:1px;height:87px;background:#e2e3e4;"></div>
<div class="a" style="left:1068px;top:97px;width:1px;height:87px;background:#e2e3e4;"></div>
<div class="a" style="left:658px;top:104px;width:1px;height:57px;background:#e2e3e4;"></div>
<div class="t " style="left:290.5px;width:300px;text-align:center;top:171.14px;font-size:12px;line-height:12px;color:#444;transform:scaleX(0.9732);transform-origin:50% 0;">Clipboard</div>
<div class="t " style="left:503.5px;width:300px;text-align:center;top:171.14px;font-size:12px;line-height:12px;color:#444;transform:scaleX(0.9445);transform-origin:50% 0;">Organize</div>
<div class="t " style="left:627.5px;width:300px;text-align:center;top:171.14px;font-size:12px;line-height:12px;color:#444;transform:scaleX(0.9369);transform-origin:50% 0;">New</div>
<div class="t " style="left:735px;width:300px;text-align:center;top:171.14px;font-size:12px;line-height:12px;color:#444;transform:scaleX(0.9196);transform-origin:50% 0;">Open</div>
<div class="t " style="left:860px;width:300px;text-align:center;top:171.14px;font-size:12px;line-height:12px;color:#444;transform:scaleX(0.8693);transform-origin:50% 0;">Select</div>
<svg class="a" style="left:338px;top:107px" width="21" height="21" viewBox="0 0 21 21"><path d="M12 1 L20 9 L17.5 10 L13.5 14 L13 18 L3 8 L7 7.5 L11 3.5Z" fill="#8d9399"/><path d="M6.5 14.5 L1 20" stroke="#8d9399" stroke-width="2"/></svg>
<div class="t " style="left:199px;width:300px;text-align:center;top:138.64px;font-size:12px;line-height:12px;color:#262626;transform:scaleX(0.9582);transform-origin:50% 0;">Pin to Quick</div>
<div class="t " style="left:199px;width:300px;text-align:center;top:152.14px;font-size:12px;line-height:12px;color:#262626;transform:scaleX(0.9101);transform-origin:50% 0;">access</div>
<svg class="a" style="left:391px;top:103px" width="26" height="30" viewBox="0 0 26 30"><path d="M0.5 0.5 H11 L15 4.5 V20.5 H0.5Z" fill="#eef3fa" stroke="#9aa7b8"/><path d="M8.5 8.5 H19 L23.5 13 V29.5 H8.5Z" fill="#f4f7fb" stroke="#9aa7b8"/><g stroke="#b5c3d6" stroke-width="1"><path d="M3 6 H12 M3 9 H12 M3 12 H8 M11 16 H21 M11 19 H21 M11 22 H21 M11 25 H21"/></g></svg>
<div class="t " style="left:253px;width:300px;text-align:center;top:138.64px;font-size:12px;line-height:12px;color:#8a8a8a;transform:scaleX(0.9281);transform-origin:50% 0;">Copy</div>
<svg class="a" style="left:435px;top:103px" width="22" height="30" viewBox="0 0 22 30"><rect x="0.8" y="3" width="20.4" height="26.2" rx="1.5" fill="#8c9aaa"/><rect x="3" y="6" width="16" height="21" fill="#eef3fa"/><rect x="7" y="0.8" width="8" height="4" rx="1" fill="#8c9aaa"/><g stroke="#bccadb"><path d="M5 10 H17 M5 13 H17 M5 16 H17 M5 19 H17 M5 22 H17"/></g></svg>
<div class="t " style="left:295.5px;width:300px;text-align:center;top:138.64px;font-size:12px;line-height:12px;color:#8a8a8a;transform:scaleX(0.8798);transform-origin:50% 0;">Paste</div>
<svg class="a" style="left:471px;top:101px" width="15" height="18" viewBox="0 0 15 18"><g fill="none" stroke="#8d9fb4" stroke-width="1.5"><path d="M3 0.5 L9 11 M12 0.5 L6 11"/><circle cx="4" cy="14" r="2.7"/><circle cx="11" cy="14" r="2.7"/></g></svg>
<div class="t " style="left:489.5px;top:104.64px;font-size:12px;line-height:12px;color:#8a8a8a;transform:scaleX(0.9632);transform-origin:0 0;">Cut</div>
<svg class="a" style="left:470px;top:127px" width="16" height="10" viewBox="0 0 16 10"><rect x="0.5" y="0.5" width="15" height="9" fill="#dfe8f3" stroke="#a8b6c8"/><text x="2" y="7.5" font-size="6.5" font-family="Liberation Serif" fill="#6b7f99">W...</text></svg>
<div class="t " style="left:489.5px;top:127.14px;font-size:12px;line-height:12px;color:#8a8a8a;transform:scaleX(0.9506);transform-origin:0 0;">Copy path</div>
<svg class="a" style="left:471px;top:146px" width="14" height="16" viewBox="0 0 14 16"><rect x="0.8" y="1.5" width="12.4" height="14" rx="1" fill="#eef3fa" stroke="#8c9aaa" stroke-width="1.5"/><rect x="4" y="0" width="6" height="3" fill="#8c9aaa"/><path d="M5 12 L9 8 M6.5 7.5 H9.5 V10.5" fill="none" stroke="#6d86a6" stroke-width="1.3"/></svg>
<div class="t " style="left:489.5px;top:149.14px;font-size:12px;line-height:12px;color:#8a8a8a;transform:scaleX(0.9450);transform-origin:0 0;">Paste shortcut</div>
<svg class="a" style="left:581px;top:110px" width="15" height="18" viewBox="0 0 15 18"><path d="M0.5 0.5 H9 L12.5 4 V17.5 H0.5Z" fill="#e3eaf4" stroke="#c5d0de"/><path d="M14.5 13 H8 M10.5 10.5 L8 13 L10.5 15.5" fill="none" stroke="#8da2bd" stroke-width="1.4"/></svg>
<div class="t " style="left:599.5px;top:112.64px;font-size:12px;line-height:12px;color:#8a8a8a;transform:scaleX(0.9605);transform-origin:0 0;">Move to</div>
<svg class="a" style="left:644px;top:117px" width="8" height="4" viewBox="0 0 8 4"><path d="M0 0 H7 L3.5 3.5Z" fill="#b0b0b0"/></svg>
<svg class="a" style="left:581px;top:138px" width="15" height="19" viewBox="0 0 15 19"><path d="M0.5 0.5 H9 L12.5 4 V18.5 H0.5Z" fill="#e3eaf4" stroke="#c5d0de"/><path d="M4.5 3.5 H11 L14.5 7 V15.5 H4.5Z" fill="#eef3fa" stroke="#9fb0c6"/><path d="M7 9 H12 M7 11 H12 M7 13 H12" stroke="#9fb0c6"/></svg>
<div class="t " style="left:599.5px;top:141.64px;font-size:12px;line-height:12px;color:#8a8a8a;transform:scaleX(0.9430);transform-origin:0 0;">Copy to</div>
<svg class="a" style="left:642px;top:146px" width="8" height="4" viewBox="0 0 8 4"><path d="M0 0 H7 L3.5 3.5Z" fill="#b0b0b0"/></svg>
<svg class="a" style="left:666px;top:112px" width="14" height="13" viewBox="0 0 14 13"><path d="M1.5 1.5 L12.5 11.5 M12.5 1.5 L1.5 11.5" stroke="#7b8a9c" stroke-width="2.6" stroke-linecap="round"/></svg>
<div class="t " style="left:684.5px;top:112.64px;font-size:12px;line-height:12px;color:#8a8a8a;transform:scaleX(0.9369);transform-origin:0 0;">Delete</div>
<svg class="a" style="left:722px;top:116px" width="6" height="4" viewBox="0 0 6 4"><path d="M0 0 H6 L3 3.5Z" fill="#222"/></svg>
<svg class="a" style="left:665px;top:138px" width="17" height="16" viewBox="0 0 17 16"><rect x="0.5" y="5.5" width="15" height="6" fill="#dfe8f3" stroke="#9fb0c6"/><rect x="3" y="7.5" width="6" height="2" fill="#7a90ad"/><path d="M12 0.5 V15.5 M10 0.5 H14 M10 15.5 H14" stroke="#6d7f96"/></svg>
<div class="t " style="left:684.5px;top:141.64px;font-size:12px;line-height:12px;color:#8a8a8a;transform:scaleX(0.8818);transform-origin:0 0;">Rename</div>
<svg class="a" style="left:751px;top:104px" width="20" height="28" viewBox="0 0 20 28"><path d="M0 2 L11 0 V22 L0 26Z" fill="#f5c84a"/><path d="M2 3 H18 V24 H2Z" fill="#f8d775"/><path d="M0 2 L10 4 V27 L0 25Z" fill="#fbe59a"/></svg>
<div class="t " style="left:612.5px;width:300px;text-align:center;top:138.64px;font-size:12px;line-height:12px;color:#262626;transform:scaleX(0.9369);transform-origin:50% 0;">New</div>
<div class="t " style="left:612.5px;width:300px;text-align:center;top:152.14px;font-size:12px;line-height:12px;color:#262626;transform:scaleX(1.0323);transform-origin:50% 0;">folder</div>
<svg class="a" style="left:786px;top:101px" width="17" height="18" viewBox="0 0 17 18"><rect x="0.5" y="0.5" width="11" height="8" fill="#cfe0f0" stroke="#7a9bbb"/><path d="M5.5 5.5 H12 L15.5 9 V17.5 H5.5Z" fill="#fff" stroke="#7f8a96"/><path d="M8 11 H13 M8 13 H13 M8 15 H13" stroke="#a9b4bf"/></svg>
<svg class="a" style="left:806px;top:108px" width="6" height="4" viewBox="0 0 6 4"><path d="M0 0 H6 L3 3.5Z" fill="#222"/></svg>
<svg class="a" style="left:787px;top:123px" width="16" height="18" viewBox="0 0 16 18"><path d="M3.5 0.5 H11 L14.5 4 V17.5 H3.5Z" fill="#fff" stroke="#7f8a96"/><path d="M0 5 H6 M0 7.5 H6 M0 10 H6 M2 3 V12" stroke="#3c6fb0" stroke-width="1"/></svg>
<svg class="a" style="left:806px;top:130px" width="6" height="4" viewBox="0 0 6 4"><path d="M0 0 H6 L3 3.5Z" fill="#222"/></svg>
<svg class="a" style="left:841px;top:104px" width="23" height="29" viewBox="0 0 23 29"><path d="M0.5 0.5 H16 L22.5 7 V28.5 H0.5Z" fill="#fff" stroke="#8a8a8a"/><path d="M16 0.5 V7 H22.5" fill="none" stroke="#8a8a8a"/><path d="M5 15 L10 20 L17.5 11" fill="none" stroke="#e06a20" stroke-width="2.2"/></svg>
<div class="t " style="left:703px;width:300px;text-align:center;top:138.64px;font-size:12px;line-height:12px;color:#262626;transform:scaleX(0.9323);transform-origin:50% 0;">Properties</div>
<svg class="a" style="left:849px;top:155px" width="7" height="4" viewBox="0 0 7 4"><path d="M0 0 H7 L3.5 3.5Z" fill="#222"/></svg>
<svg class="a" style="left:887px;top:102px" width="14" height="16" viewBox="0 0 14 16"><rect x="0.5" y="0.5" width="12" height="14" fill="#eef3fa" stroke="#b8c4d2"/><path d="M2.5 3 H4.5 M2.5 6.5 H4.5 M2.5 10 H4.5 M6 3 H10 M6 6.5 H10" stroke="#9aa9bb" stroke-width="1.5"/><path d="M9 12 L13 12 M11 10 V15" stroke="#9aa9bb" stroke-width="1.5"/></svg>
<div class="t " style="left:904.5px;top:104.64px;font-size:12px;line-height:12px;color:#8a8a8a;transform:scaleX(0.9537);transform-origin:0 0;">Open</div>
<svg class="a" style="left:937px;top:108px" width="7" height="4" viewBox="0 0 7 4"><path d="M0 0 H7 L3.5 3.5Z" fill="#c0c0c0"/></svg>
<svg class="a" style="left:887px;top:124px" width="14" height="17" viewBox="0 0 14 17"><path d="M0.5 0.5 H9 L13 4.5 V16.5 H0.5Z" fill="#f2f5f9" stroke="#c2ccd8"/><path d="M3 14 L11 5" stroke="#b4c0cf" stroke-width="1.5"/></svg>
<div class="t " style="left:904.5px;top:126.64px;font-size:12px;line-height:12px;color:#8a8a8a;transform:scaleX(0.9426);transform-origin:0 0;">Edit</div>
<svg class="a" style="left:885px;top:145px" width="18" height="18" viewBox="0 0 18 18"><rect x="0" y="0.5" width="10.5" height="13.5" fill="#f6d35c"/><circle cx="10.5" cy="10.5" r="5.3" fill="#eef1f4" stroke="#6b6b6b"/><path d="M10.5 7.5 V10.5 L12.5 12" stroke="#c04040" stroke-width="0.9" fill="none"/><path d="M1.5 11 L4.5 14.5 L9.5 8.5" fill="none" stroke="#3aa13a" stroke-width="2.2"/></svg>
<div class="t " style="left:904.5px;top:148.14px;font-size:12px;line-height:12px;color:#262626;transform:scaleX(0.9640);transform-origin:0 0;">History</div>
<svg class="a" style="left:961px;top:102px" width="17" height="17" viewBox="0 0 17 17"><g fill="#bde0fb" stroke="#2f86d4" stroke-width="1"><rect x="0.5" y="0.5" width="7.5" height="7.5"/><rect x="9" y="0.5" width="7.5" height="7.5"/><rect x="0.5" y="9" width="7.5" height="7.5"/><rect x="9" y="9" width="7.5" height="7.5"/></g></svg>
<div class="t " style="left:980px;top:104.64px;font-size:12px;line-height:12px;color:#262626;transform:scaleX(0.9034);transform-origin:0 0;">Select all</div>
<svg class="a" style="left:962px;top:125px" width="15" height="15" viewBox="0 0 15 15"><g fill="none" stroke="#9a9a9a" stroke-width="1"><rect x="0.5" y="0.5" width="5.5" height="5.5"/><rect x="8.5" y="0.5" width="5.5" height="5.5"/><rect x="0.5" y="8.5" width="5.5" height="5.5"/><rect x="8.5" y="8.5" width="5.5" height="5.5"/></g></svg>
<div class="t " style="left:980px;top:126.64px;font-size:12px;line-height:12px;color:#262626;transform:scaleX(0.9465);transform-origin:0 0;">Select none</div>
<svg class="a" style="left:961px;top:146px" width="17" height="17" viewBox="0 0 17 17"><g stroke-width="1"><rect x="0.5" y="0.5" width="7" height="7" fill="none" stroke="#9a9a9a"/><rect x="9" y="0.5" width="7.5" height="7.5" fill="#bde0fb" stroke="#2f86d4"/><rect x="0.5" y="9" width="7.5" height="7.5" fill="#bde0fb" stroke="#2f86d4"/><rect x="9.5" y="9.5" width="7" height="7" fill="none" stroke="#9a9a9a"/></g></svg>
<div class="t " style="left:980px;top:148.14px;font-size:12px;line-height:12px;color:#262626;transform:scaleX(0.9663);transform-origin:0 0;">Invert selection</div>
<svg class="a" style="left:322px;top:197px" width="14" height="12" viewBox="0 0 14 12"><path d="M13 6 H1.5 M6.5 1 L1.5 6 L6.5 11" fill="none" stroke="#c8c8c8" stroke-width="1.3"/></svg>
<svg class="a" style="left:352px;top:197px" width="14" height="12" viewBox="0 0 14 12"><path d="M1 6 H12.5 M7.5 1 L12.5 6 L7.5 11" fill="none" stroke="#c8c8c8" stroke-width="1.3"/></svg>
<svg class="a" style="left:379px;top:201px" width="8" height="5" viewBox="0 0 8 5"><path d="M0.5 0.5 L4 4 L7.5 0.5" fill="none" stroke="#c8c8c8" stroke-width="1.1"/></svg>
<svg class="a" style="left:396px;top:196px" width="13" height="15" viewBox="0 0 13 15"><path d="M6.5 14.5 V1.5 M1 7 L6.5 1.5 L12 7" fill="none" stroke="#6a6a6a" stroke-width="1.6"/></svg>
<div class="a" style="left:416px;top:193px;width:452px;height:22px;box-sizing:border-box;border:1px solid #d9d9d9;background:#fff;"></div>
<div class="a" style="left:850px;top:193px;width:1px;height:22px;background:#d9d9d9;"></div>
<svg class="a" style="left:419px;top:194px" width="16" height="17" viewBox="0 0 16 17"><path d="M5 0.5 H11 V8 H15.5 L8 16 L0.5 8 H5Z" fill="#3b8ede" stroke="#2a73c0" stroke-width="0.8"/></svg>
<svg class="a" style="left:441px;top:200px" width="5" height="8" viewBox="0 0 5 8"><path d="M0.5 0.5 L4 4 L0.5 7.5" fill="none" stroke="#666" stroke-width="1.1"/></svg>
<div class="t " style="left:456px;top:197.84px;font-size:12px;line-height:12px;color:#262626;transform:scaleX(0.9136);transform-origin:0 0;">This PC</div>
<svg class="a" style="left:504px;top:200px" width="5" height="8" viewBox="0 0 5 8"><path d="M0.5 0.5 L4 4 L0.5 7.5" fill="none" stroke="#666" stroke-width="1.1"/></svg>
<div class="t " style="left:518px;top:197.84px;font-size:12px;line-height:12px;color:#262626;transform:scaleX(0.9937);transform-origin:0 0;">Downloads</div>
<svg class="a" style="left:838px;top:200px" width="10" height="7" viewBox="0 0 10 7"><path d="M0.8 0.8 L5 5 L9.2 0.8" fill="none" stroke="#555" stroke-width="1.4"/></svg>
<svg class="a" style="left:853px;top:197px" width="12" height="13" viewBox="0 0 12 13"><path d="M9.5 3.5 A4.8 4.8 0 1 1 3.5 3" fill="none" stroke="#6a6a6a" stroke-width="1.3"/><path d="M1.5 1 L4.5 3 L2 5.5" fill="none" stroke="#6a6a6a" stroke-width="1.3"/></svg>
<div class="a" style="left:880px;top:193px;width:202px;height:22px;box-sizing:border-box;border:1px solid #d9d9d9;background:#fff;"></div>
<div class="t " style="left:889px;top:197.84px;font-size:12px;line-height:12px;color:#6d6d6d;transform:scaleX(0.9580);transform-origin:0 0;">Search Downloads</div>
<svg class="a" style="left:1062px;top:197px" width="12" height="12" viewBox="0 0 12 12"><circle cx="7" cy="5" r="4" fill="none" stroke="#555" stroke-width="1.4"/><path d="M4.3 7.7 L0.8 11.2" stroke="#555" stroke-width="1.8"/></svg>
<div class="a" style="left:450px;top:222px;width:16px;height:385px;background:#f0f0f0;"></div>
<div class="a" style="left:450px;top:345px;width:16px;height:117px;background:#cdcdcd;"></div>
<svg class="a" style="left:454px;top:228px" width="8" height="5" viewBox="0 0 8 5"><path d="M0.5 4.5 L4 1 L7.5 4.5" fill="none" stroke="#555" stroke-width="1.5"/></svg>
<svg class="a" style="left:454px;top:598px" width="8" height="5" viewBox="0 0 8 5"><path d="M0.5 0.5 L4 4 L7.5 0.5" fill="none" stroke="#555" stroke-width="1.5"/></svg>
<div class="a" style="left:310px;top:582px;width:140px;height:24px;background:#d9d9d9;"></div>
<svg class="a" style="left:352px;top:226px" width="13" height="16" viewBox="0 0 13 16"><path d="M0.5 0.5 H9 L12.5 4 V15.5 H0.5Z" fill="#fff" stroke="#7a8593"/><path d="M2.5 5 H10 M2.5 7.5 H10 M2.5 10 H10 M2.5 12.5 H10" stroke="#3f86cf" stroke-width="1"/><rect x="3" y="2" width="4" height="2" fill="#3f86cf"/></svg>
<div class="t " style="left:371px;top:228.34px;font-size:12px;line-height:12px;color:#000;transform:scaleX(0.9967);transform-origin:0 0;">Documents</div>
<svg class="a" style="left:351px;top:249px" width="16" height="17" viewBox="0 0 16 17"><path d="M5 0.5 H11 V8 H15.5 L8 16 L0.5 8 H5Z" fill="#3b8ede" stroke="#2f7ccc" stroke-width="0.6"/></svg>
<div class="t " style="left:371px;top:252.34px;font-size:12px;line-height:12px;color:#000;transform:scaleX(0.9937);transform-origin:0 0;">Downloads</div>
<svg class="a" style="left:350px;top:273px" width="17" height="17" viewBox="0 0 17 17"><path d="M8.5 0.8 L10.8 5.9 L16.3 6.4 L12.1 10.1 L13.4 15.6 L8.5 12.7 L3.6 15.6 L4.9 10.1 L0.7 6.4 L6.2 5.9Z" fill="#f7c948" stroke="#d9902a" stroke-width="0.9"/></svg>
<div class="t " style="left:371px;top:276.34px;font-size:12px;line-height:12px;color:#000;transform:scaleX(0.9522);transform-origin:0 0;">Favorites</div>
<svg class="a" style="left:351px;top:297px" width="16" height="17" viewBox="0 0 16 17"><path d="M3 16.5 C1 12 1.5 6 8.5 5.5 V1.5 L15.5 7.5 L8.5 13 V9.5 C5 9.5 3.5 12 3 16.5Z" fill="#3e8ed8"/></svg>
<div class="t " style="left:371px;top:300.34px;font-size:12px;line-height:12px;color:#000;transform:scaleX(0.9637);transform-origin:0 0;">Links</div>
<svg class="a" style="left:352px;top:321px" width="15" height="17" viewBox="0 0 15 17"><rect x="0" y="0" width="15" height="17" fill="#fbeec2"/><rect x="0" y="0" width="2" height="17" fill="#f6dfa0"/></svg>
<div class="t " style="left:371px;top:324.34px;font-size:12px;line-height:12px;color:#000;transform:scaleX(1.0039);transform-origin:0 0;">MicrosoftEdge</div>
<svg class="a" style="left:352px;top:345px" width="14" height="17" viewBox="0 0 14 17"><path d="M5 2 V13" stroke="#2f83d6" stroke-width="2"/><ellipse cx="3.5" cy="13.5" rx="3.3" ry="2.6" fill="#2f83d6"/><path d="M5 1 C7 4 12 5 10.5 11 C11 7 8 6 5 5Z" fill="#2f83d6"/></svg>
<div class="t " style="left:371px;top:348.34px;font-size:12px;line-height:12px;color:#000;transform:scaleX(1.0209);transform-origin:0 0;">Music</div>
<svg class="a" style="left:350px;top:371px" width="18" height="12" viewBox="0 0 18 12"><path d="M4 11.5 C1 11.5 0.5 7.5 3 6.5 C3.5 3 7 1.5 9.5 3.5 C11 1 15.5 1.5 16 5.5 C18 6 18 11.5 15 11.5Z" fill="#2c7fd4"/></svg>
<div class="t " style="left:371px;top:372.34px;font-size:12px;line-height:12px;color:#000;transform:scaleX(0.9470);transform-origin:0 0;">OneDrive</div>
<svg class="a" style="left:350px;top:394px" width="17" height="14" viewBox="0 0 17 14"><rect x="0.5" y="0.5" width="16" height="13" fill="#fff" stroke="#6d7a88"/><rect x="2.5" y="2.5" width="12" height="9" fill="#6fa8dc"/><path d="M2.5 9 C6 6 9 8 14.5 7 V11.5 H2.5Z" fill="#3f5f73"/></svg>
<div class="t " style="left:371px;top:396.34px;font-size:12px;line-height:12px;color:#000;transform:scaleX(0.9686);transform-origin:0 0;">Pictures</div>
<svg class="a" style="left:349px;top:417px" width="19" height="17" viewBox="0 0 19 17"><path d="M9 1 C12 4 17 6 17 10 C17 13 14 14 11.5 12 L12.5 16 H7 L8 12 C5 14 1 13 1.5 9.5 C2 6 6 4 9 1Z" fill="#44566a"/><path d="M1.5 9.5 C2 6 6 4 9 1 V12 C5 14 1 13 1.5 9.5Z" fill="#8aa5c0"/></svg>
<div class="t " style="left:371px;top:420.34px;font-size:12px;line-height:12px;color:#000;transform:scaleX(0.9205);transform-origin:0 0;">Saved Games</div>
<svg class="a" style="left:350px;top:441px" width="18" height="18" viewBox="0 0 18 18"><circle cx="11" cy="7" r="5.8" fill="#d8ecfa" stroke="#8fa6bb" stroke-width="1.3"/><path d="M6.8 11.5 L1 17" stroke="#8a8f96" stroke-width="2.2"/></svg>
<div class="t " style="left:371px;top:444.34px;font-size:12px;line-height:12px;color:#000;transform:scaleX(0.8875);transform-origin:0 0;">Searches</div>
<svg class="a" style="left:352px;top:465px" width="15" height="17" viewBox="0 0 15 17"><rect x="0" y="0" width="15" height="17" fill="#2c3e50"/><rect x="3" y="2" width="9" height="13" fill="#5aa0c8"/><path d="M3 11 L6 7 L9 10 L12 6 V15 H3Z" fill="#e8b838"/><g fill="#fff"><rect x="0.7" y="1.5" width="1.3" height="1.5"/><rect x="0.7" y="5" width="1.3" height="1.5"/><rect x="0.7" y="8.5" width="1.3" height="1.5"/><rect x="0.7" y="12" width="1.3" height="1.5"/><rect x="13" y="1.5" width="1.3" height="1.5"/><rect x="13" y="5" width="1.3" height="1.5"/><rect x="13" y="8.5" width="1.3" height="1.5"/><rect x="13" y="12" width="1.3" height="1.5"/></g></svg>
<div class="t " style="left:371px;top:468.34px;font-size:12px;line-height:12px;color:#000;transform:scaleX(0.9593);transform-origin:0 0;">Videos</div>
<svg class="a" style="left:341px;top:489px" width="17" height="15" viewBox="0 0 17 15"><rect x="0.5" y="0.5" width="16" height="11" fill="#6cc3f3" stroke="#2b88c8"/><rect x="1.5" y="1.5" width="14" height="9" fill="#43aef0"/><rect x="3" y="13" width="11" height="1.5" fill="#8c9aa8"/></svg>
<div class="t " style="left:363px;top:492.34px;font-size:12px;line-height:12px;color:#000;transform:scaleX(0.9136);transform-origin:0 0;">This PC</div>
<svg class="a" style="left:350px;top:513px" width="17" height="17" viewBox="0 0 17 17"><path d="M8.5 0.5 L16.5 4.5 V12.5 L8.5 16.5 L0.5 12.5 V4.5Z" fill="#5fd0ec"/><path d="M8.5 8.5 L16.5 4.5 V12.5 L8.5 16.5Z" fill="#2a9fd0"/><path d="M0.5 4.5 L8.5 0.5 L16.5 4.5 L8.5 8.5Z" fill="#a8ecfa"/></svg>
<div class="t " style="left:371px;top:516.34px;font-size:12px;line-height:12px;color:#000;transform:scaleX(0.9603);transform-origin:0 0;">3D Objects</div>
<svg class="a" style="left:350px;top:538px" width="17" height="15" viewBox="0 0 17 15"><rect x="0" y="0" width="17" height="13" fill="#1e7fd6"/><rect x="1" y="1" width="15" height="10" fill="#2f9af0"/><rect x="0" y="12" width="17" height="2" fill="#155fa8"/></svg>
<div class="t " style="left:371px;top:540.34px;font-size:12px;line-height:12px;color:#000;transform:scaleX(0.9539);transform-origin:0 0;">Desktop</div>
<svg class="a" style="left:352px;top:562px" width="13" height="16" viewBox="0 0 13 16"><path d="M0.5 0.5 H9 L12.5 4 V15.5 H0.5Z" fill="#fff" stroke="#7a8593"/><path d="M2.5 5 H10 M2.5 7.5 H10 M2.5 10 H10 M2.5 12.5 H10" stroke="#3f86cf" stroke-width="1"/><rect x="3" y="2" width="4" height="2" fill="#3f86cf"/></svg>
<div class="t " style="left:371px;top:564.34px;font-size:12px;line-height:12px;color:#000;transform:scaleX(0.9967);transform-origin:0 0;">Documents</div>
<svg class="a" style="left:351px;top:585px" width="16" height="17" viewBox="0 0 16 17"><path d="M5 0.5 H11 V8 H15.5 L8 16 L0.5 8 H5Z" fill="#3b8ede" stroke="#2f7ccc" stroke-width="0.6"/></svg>
<div class="t " style="left:371px;top:588.34px;font-size:12px;line-height:12px;color:#000;transform:scaleX(0.9937);transform-origin:0 0;">Downloads</div>
<div class="t " style="left:487.5px;top:228.54px;font-size:12px;line-height:12px;color:#4c607a;transform:scaleX(0.9839);transform-origin:0 0;">Name</div>
<div class="t " style="left:748.5px;top:228.54px;font-size:12px;line-height:12px;color:#4c607a;transform:scaleX(0.9994);transform-origin:0 0;">Date modified</div>
<div class="t " style="left:892px;top:228.54px;font-size:12px;line-height:12px;color:#4c607a;transform:scaleX(0.9225);transform-origin:0 0;">Type</div>
<div class="t " style="left:1012px;top:228.54px;font-size:12px;line-height:12px;color:#4c607a;transform:scaleX(0.8568);transform-origin:0 0;">Size</div>
<div class="a" style="left:742px;top:221px;width:1px;height:27px;background:#e5e5e5;"></div>
<div class="a" style="left:886px;top:221px;width:1px;height:27px;background:#e5e5e5;"></div>
<div class="a" style="left:1005px;top:221px;width:1px;height:27px;background:#e5e5e5;"></div>
<div class="a" style="left:1085px;top:221px;width:1px;height:27px;background:#e5e5e5;"></div>
<svg class="a" style="left:810px;top:222px" width="8" height="5" viewBox="0 0 8 5"><path d="M0.5 0.5 L4 4 L7.5 0.5" fill="none" stroke="#8a8a8a" stroke-width="1"/></svg>
<svg class="a" style="left:477px;top:261px" width="11" height="7" viewBox="0 0 11 7"><path d="M0.5 0.5 L5.5 5.5 L10.5 0.5" fill="none" stroke="#8090a8" stroke-width="1.2"/></svg>
<div class="t " style="left:491px;top:258.00px;font-size:15px;line-height:15px;color:#1e3287;transform:scaleX(0.9835);transform-origin:0 0;">Today (1)</div>
<div class="a" style="left:560px;top:266px;width:525px;height:1px;background:#e2e2e2;"></div>
<svg class="a" style="left:477px;top:314px" width="11" height="7" viewBox="0 0 11 7"><path d="M0.5 0.5 L5.5 5.5 L10.5 0.5" fill="none" stroke="#8090a8" stroke-width="1.2"/></svg>
<div class="t " style="left:491px;top:311.30px;font-size:15px;line-height:15px;color:#1e3287;transform:scaleX(1.0246);transform-origin:0 0;">A long time ago (6)</div>
<div class="a" style="left:628px;top:319px;width:457px;height:1px;background:#e2e2e2;"></div>
<svg class="a" style="left:490px;top:283px" width="13" height="17" viewBox="0 0 13 17"><path d="M0.5 0.5 H8.5 L12.5 4.5 V16.5 H0.5Z" fill="#fff" stroke="#9a9a9a"/><path d="M8.5 0.5 V4.5 H12.5" fill="none" stroke="#9a9a9a"/></svg>
<div class="t " style="left:508px;top:285.84px;font-size:12px;line-height:12px;color:#000;transform:scaleX(1.0045);transform-origin:0 0;">Aesthetic.rar.crdownload</div>
<div class="t " style="left:748px;top:285.84px;font-size:12px;line-height:12px;color:#6d6d6d;transform:scaleX(0.9561);transform-origin:0 0;">6/21/2025 11:13 PM</div>
<div class="t " style="left:892px;top:285.84px;font-size:12px;line-height:12px;color:#6d6d6d;transform:scaleX(0.9397);transform-origin:0 0;">CRDOWNLOAD File</div>
<div class="t " style="left:578px;width:500px;text-align:right;top:285.84px;font-size:12px;line-height:12px;color:#6d6d6d;transform:scaleX(0.8841);transform-origin:100% 0;">0 KB</div>
<svg class="a" style="left:490px;top:336px" width="13" height="17" viewBox="0 0 13 17"><path d="M0.5 0.5 H9 L11.5 3 V15.5 H0.5Z" fill="#fff" stroke="#8a8a8a"/><path d="M9 0.5 V3 H11.5" fill="none" stroke="#b0b0b0"/><rect x="2.5" y="5.5" width="7" height="6" fill="#fff" stroke="#6f6f6f"/><path d="M4 10 L5.5 8 L8 7 V10Z" fill="#4a5a62"/></svg>
<div class="t " style="left:508px;top:338.84px;font-size:12px;line-height:12px;color:#000;transform:scaleX(0.9951);transform-origin:0 0;">estdivision.png</div>
<div class="t " style="left:748px;top:338.84px;font-size:12px;line-height:12px;color:#6d6d6d;transform:scaleX(0.9727);transform-origin:0 0;">8/24/2024 2:51 AM</div>
<div class="t " style="left:892px;top:338.84px;font-size:12px;line-height:12px;color:#6d6d6d;transform:scaleX(0.9243);transform-origin:0 0;">PNG File</div>
<div class="t " style="left:578px;width:500px;text-align:right;top:338.84px;font-size:12px;line-height:12px;color:#6d6d6d;transform:scaleX(0.8841);transform-origin:100% 0;">4 KB</div>
<svg class="a" style="left:490px;top:357px" width="13" height="17" viewBox="0 0 13 17"><path d="M0.5 0.5 H9 L11.5 3 V15.5 H0.5Z" fill="#fff" stroke="#8a8a8a"/><path d="M9 0.5 V3 H11.5" fill="none" stroke="#b0b0b0"/><rect x="2.5" y="5.5" width="7" height="6" fill="#fff" stroke="#6f6f6f"/><path d="M4 10 L5.5 8 L8 7 V10Z" fill="#4a5a62"/></svg>
<div class="t " style="left:508px;top:359.84px;font-size:12px;line-height:12px;color:#000;transform:scaleX(1.0025);transform-origin:0 0;">directionshours.png</div>
<div class="t " style="left:748px;top:359.84px;font-size:12px;line-height:12px;color:#6d6d6d;transform:scaleX(0.9727);transform-origin:0 0;">10/6/2023 2:49 AM</div>
<div class="t " style="left:892px;top:359.84px;font-size:12px;line-height:12px;color:#6d6d6d;transform:scaleX(0.9243);transform-origin:0 0;">PNG File</div>
<div class="t " style="left:578px;width:500px;text-align:right;top:359.84px;font-size:12px;line-height:12px;color:#6d6d6d;transform:scaleX(0.8841);transform-origin:100% 0;">3 KB</div>
<svg class="a" style="left:490px;top:378px" width="13" height="17" viewBox="0 0 13 17"><path d="M0.5 0.5 H9 L11.5 3 V15.5 H0.5Z" fill="#fff" stroke="#8a8a8a"/><path d="M9 0.5 V3 H11.5" fill="none" stroke="#b0b0b0"/><rect x="2.5" y="5.5" width="7" height="6" fill="#fff" stroke="#6f6f6f"/><path d="M4 10 L5.5 8 L8 7 V10Z" fill="#4a5a62"/></svg>
<div class="t " style="left:508px;top:380.84px;font-size:12px;line-height:12px;color:#000;transform:scaleX(0.9688);transform-origin:0 0;">careersfashion.jpg</div>
<div class="t " style="left:748px;top:380.84px;font-size:12px;line-height:12px;color:#6d6d6d;transform:scaleX(0.9727);transform-origin:0 0;">1/18/2023 6:13 AM</div>
<div class="t " style="left:892px;top:380.84px;font-size:12px;line-height:12px;color:#6d6d6d;transform:scaleX(0.8693);transform-origin:0 0;">JPG File</div>
<div class="t " style="left:578px;width:500px;text-align:right;top:380.84px;font-size:12px;line-height:12px;color:#6d6d6d;transform:scaleX(0.8868);transform-origin:100% 0;">20 KB</div>
<svg class="a" style="left:490px;top:399px" width="13" height="17" viewBox="0 0 13 17"><path d="M0.5 0.5 H9 L11.5 3 V15.5 H0.5Z" fill="#fff" stroke="#8a8a8a"/><path d="M9 0.5 V3 H11.5" fill="none" stroke="#b0b0b0"/><rect x="2.5" y="5.5" width="7" height="6" fill="#fff" stroke="#6f6f6f"/><path d="M4 10 L5.5 8 L8 7 V10Z" fill="#4a5a62"/></svg>
<div class="t " style="left:508px;top:401.84px;font-size:12px;line-height:12px;color:#000;transform:scaleX(1.0071);transform-origin:0 0;">januarycomponents.png</div>
<div class="t " style="left:748px;top:401.84px;font-size:12px;line-height:12px;color:#6d6d6d;transform:scaleX(0.9727);transform-origin:0 0;">6/13/2021 9:36 AM</div>
<div class="t " style="left:892px;top:401.84px;font-size:12px;line-height:12px;color:#6d6d6d;transform:scaleX(0.9243);transform-origin:0 0;">PNG File</div>
<div class="t " style="left:578px;width:500px;text-align:right;top:401.84px;font-size:12px;line-height:12px;color:#6d6d6d;transform:scaleX(0.8841);transform-origin:100% 0;">6 KB</div>
<svg class="a" style="left:490px;top:420px" width="13" height="17" viewBox="0 0 13 17"><path d="M0.5 0.5 H9 L11.5 3 V15.5 H0.5Z" fill="#fff" stroke="#8a8a8a"/><path d="M9 0.5 V3 H11.5" fill="none" stroke="#b0b0b0"/><rect x="2.5" y="5.5" width="7" height="6" fill="#fff" stroke="#6f6f6f"/><path d="M4 10 L5.5 8 L8 7 V10Z" fill="#4a5a62"/></svg>
<div class="t " style="left:508px;top:422.84px;font-size:12px;line-height:12px;color:#000;transform:scaleX(0.9913);transform-origin:0 0;">resourcehit.png</div>
<div class="t " style="left:748px;top:422.84px;font-size:12px;line-height:12px;color:#6d6d6d;transform:scaleX(0.9549);transform-origin:0 0;">2/9/2020 11:03 PM</div>
<div class="t " style="left:892px;top:422.84px;font-size:12px;line-height:12px;color:#6d6d6d;transform:scaleX(0.9243);transform-origin:0 0;">PNG File</div>
<div class="t " style="left:578px;width:500px;text-align:right;top:422.84px;font-size:12px;line-height:12px;color:#6d6d6d;transform:scaleX(0.8841);transform-origin:100% 0;">3 KB</div>
<svg class="a" style="left:490px;top:441px" width="13" height="17" viewBox="0 0 13 17"><path d="M0.5 0.5 H9 L11.5 3 V15.5 H0.5Z" fill="#fff" stroke="#8a8a8a"/><path d="M9 0.5 V3 H11.5" fill="none" stroke="#b0b0b0"/><rect x="2.5" y="5.5" width="7" height="6" fill="#fff" stroke="#6f6f6f"/><path d="M4 10 L5.5 8 L8 7 V10Z" fill="#4a5a62"/></svg>
<div class="t " style="left:508px;top:443.84px;font-size:12px;line-height:12px;color:#000;transform:scaleX(0.9992);transform-origin:0 0;">racecontinue.png</div>
<div class="t " style="left:748px;top:443.84px;font-size:12px;line-height:12px;color:#6d6d6d;transform:scaleX(0.9465);transform-origin:0 0;">1/20/2018 3:53 PM</div>
<div class="t " style="left:892px;top:443.84px;font-size:12px;line-height:12px;color:#6d6d6d;transform:scaleX(0.9243);transform-origin:0 0;">PNG File</div>
<div class="t " style="left:578px;width:500px;text-align:right;top:443.84px;font-size:12px;line-height:12px;color:#6d6d6d;transform:scaleX(0.8841);transform-origin:100% 0;">7 KB</div>
<div class="a" style="left:470px;top:593px;width:624px;height:15px;background:#f0f0f0;"></div>
<div class="a" style="left:486px;top:594px;width:589px;height:13px;background:#cdcdcd;"></div>
<svg class="a" style="left:475px;top:597px" width="6" height="8" viewBox="0 0 6 8"><path d="M5 0.5 L1.2 4 L5 7.5" fill="none" stroke="#555" stroke-width="1.6"/></svg>
<svg class="a" style="left:1083px;top:597px" width="6" height="8" viewBox="0 0 6 8"><path d="M1 0.5 L4.8 4 L1 7.5" fill="none" stroke="#555" stroke-width="1.6"/></svg>
<div class="t " style="left:324px;top:614.84px;font-size:12px;line-height:12px;color:#333;transform:scaleX(0.9822);transform-origin:0 0;">7 items</div>
<div class="a" style="left:1046px;top:609px;width:22px;height:22px;background:#cce8ff;box-sizing:border-box;border:1px solid #99d1ff;"></div>
<svg class="a" style="left:1050px;top:613px" width="15" height="14" viewBox="0 0 15 14"><g fill="none" stroke="#4a4a4a" stroke-width="1"><rect x="0.5" y="0.5" width="3" height="3"/><rect x="0.5" y="5.5" width="3" height="3"/><rect x="0.5" y="10.5" width="3" height="3"/></g><path d="M6 2 H10 M11.5 2 H15 M6 7 H10 M11.5 7 H15 M6 12 H10 M11.5 12 H15" stroke="#4a4a4a"/></svg>
<svg class="a" style="left:1072px;top:614px" width="15" height="11" viewBox="0 0 15 11"><rect x="0.5" y="0.5" width="14" height="10" fill="#fff" stroke="#6a6a6a"/><rect x="2" y="2" width="11" height="7" fill="#7fb1d8"/><path d="M2 7 C5 5 8 6 13 5.5 V9 H2Z" fill="#3d5a6c"/></svg>
<div class="a" style="left:0px;top:680px;width:1280px;height:40px;background:#011822;"></div>
<svg class="a" style="left:16px;top:692px" width="16" height="16" viewBox="0 0 16 16"><g fill="#fff"><path d="M0 2.2 L6.3 1.3 V7.3 H0Z"/><path d="M7.3 1.15 L16 0 V7.3 H7.3Z"/><path d="M0 8.4 H6.3 V14.7 L0 13.8Z"/><path d="M7.3 8.4 H16 V16 L7.3 14.85Z"/></g></svg>
<div class="a" style="left:48px;top:680px;width:287px;height:40px;background:#f2f2f2;box-shadow:inset 0 0 0 1px #d9d9d9;"></div>
<svg class="a" style="left:58px;top:690px" width="20" height="20" viewBox="0 0 20 20"><circle cx="12.2" cy="7.4" r="5.3" fill="none" stroke="#111" stroke-width="1.3"/><line x1="8.4" y1="11.3" x2="2.5" y2="17.5" stroke="#111" stroke-width="1.3"/></svg>
<div class="t " style="left:88px;top:693.30px;font-size:15px;line-height:15px;color:#333;transform-origin:0 0;letter-spacing:-0.25px;">Type here to search</div>
<svg class="a" style="left:250px;top:676px" width="86" height="44" viewBox="0 0 86 44">
<defs><linearGradient id="hill" x1="0" y1="0" x2="0" y2="1"><stop offset="0" stop-color="#7aaa62"/><stop offset="1" stop-color="#5f9050"/></linearGradient></defs>
<path d="M7 44 C12 38 20 36.5 30 36.5 H86 V44Z" fill="url(#hill)"/>
<path d="M21 20 C23 25 31 28 31.7 35 C32 40 25 41 20 40 C16.5 39 16 35 17 31 C18 27 20 24 21 20Z" fill="#7b4fc0"/>
<path d="M40 36 L43 44 M60 34 L58 44" stroke="#3f9a3a" stroke-width="2" fill="none"/>
<path d="M31 24 C31 19 34 18.5 36 21 C37 18 40 18 42 21 C44 19 48 19 48.6 23 C49 31 45 37 40 37 C35 37 31 31 31 24Z" fill="#f6c000"/>
<ellipse cx="39" cy="23.5" rx="3" ry="3.5" fill="#f07a10"/>
<path d="M47 13 C47 7 51 6 54 9 C56 5 61 5 63 8 C66 6 72 7 73 13 C74 24 68 35 60 35 C52 35 47 25 47 13Z" fill="#f8c400"/>
<ellipse cx="62" cy="14" rx="4" ry="4.5" fill="#f07010"/>
<path d="M52 16 C54 26 58 33 60 35 C62 31 64 24 63 18Z" fill="#fcd640" opacity=".8"/>
<circle cx="73" cy="36" r="5" fill="#f5b030"/><circle cx="73" cy="36" r="2" fill="#c85a10"/>
</svg>
<svg class="a" style="left:351px;top:692px" width="18" height="16" viewBox="0 0 18 16"><g fill="none" stroke="#fff" stroke-width="1"><rect x="1.5" y="3.5" width="10" height="9"/><line x1="0" y1="0.5" x2="13" y2="0.5"/><line x1="0" y1="15.5" x2="13" y2="15.5"/><line x1="15.5" y1="6" x2="15.5" y2="16"/></g><rect x="14" y="1" width="3" height="3" fill="#fff"/></svg>
<div class="a" style="left:391px;top:680px;width:27px;height:40px;background:#2d5a33;"></div>
<div class="a" style="left:418px;top:680px;width:13px;height:40px;background:#0f2838;"></div>
<div class="a" style="left:391px;top:718px;width:40px;height:2px;background:#5fe05f;"></div>
<svg class="a" style="left:399px;top:688px" width="25" height="25" viewBox="0 0 25 25">
<defs><linearGradient id="eg1" x1="0" y1="0" x2="1" y2="0.6"><stop offset="0" stop-color="#33bdf2"/><stop offset="0.55" stop-color="#36c9c0"/><stop offset="1" stop-color="#5fd86c"/></linearGradient>
<linearGradient id="eg2" x1="0" y1="0" x2="0.4" y2="1"><stop offset="0" stop-color="#1e8ff0"/><stop offset="1" stop-color="#0b55b0"/></linearGradient></defs>
<circle cx="12.5" cy="12.5" r="12" fill="url(#eg1)"/>
<path d="M0.6 11 C1 18 6 24.5 13 24.5 C17 24.5 20 23 22 21 C16 22.5 10 20 9 14.5 C8.5 11 11 8.5 14 9 C10 6 3 6 0.6 11Z" fill="url(#eg2)"/>
<path d="M9 14.5 C10 20 16 22.5 22 21 L21 17 C17 17 14 15.5 14 13 C14 11 16 10 17 10 C16 9 15 9 14 9 C11 8.5 8.5 11 9 14.5Z" fill="#0c3f7e" opacity=".85"/>
</svg>
<div class="a" style="left:440px;top:718px;width:40px;height:2px;background:#93b6e8;"></div>
<svg class="a" style="left:449px;top:691px" width="22" height="18" viewBox="0 0 22 18">
<path d="M0 1 H8 L10 3 H22 V18 H0Z" fill="#e8b93c"/>
<rect x="0" y="4" width="22" height="14" fill="#f7d05a"/>
<path d="M4 10 H18 V18 H14 V14 H8 V18 H4Z" fill="#3d8fd6"/>
</svg>
<svg class="a" style="left:497px;top:688px" width="24" height="24" viewBox="0 0 24 24">
<defs><radialGradient id="ff1" cx="0.3" cy="0.8" r="0.9"><stop offset="0" stop-color="#ff3750"/><stop offset="0.55" stop-color="#ff7a1c"/><stop offset="1" stop-color="#ffbd2e"/></radialGradient></defs>
<circle cx="12" cy="13" r="11" fill="url(#ff1)"/>
<path d="M14 1 C18 3 22 7 23 12 L17 8Z" fill="#ffcb2e"/>
<circle cx="12" cy="13" r="5.2" fill="#7542e5"/>
<path d="M5 9 C8 7 13 6 16 9 C12 8 9 9 7 12Z" fill="#ff8a1c"/>
</svg>
<svg class="a" style="left:1072px;top:695px" width="14" height="9" viewBox="0 0 14 9"><path d="M1 8 L7 2 L13 8" fill="none" stroke="#fff" stroke-width="1.2"/></svg>
<svg class="a" style="left:1096px;top:691px" width="16" height="18" viewBox="0 0 16 18"><g fill="none" stroke="#fff" stroke-width="1.1"><rect x="2" y="5.5" width="7.8" height="7.5" rx="1"/><path d="M9.8 8 L13 6.5 V12 L9.8 10.5"/><path d="M3 2.5 C5.5 0.8 9 0.8 11.5 2.5"/><path d="M3 16 C5.5 17.7 9 17.7 11.5 16"/></g></svg>
<svg class="a" style="left:1119px;top:693px" width="17" height="15" viewBox="0 0 17 15"><g fill="none" stroke="#fff" stroke-width="1.1"><path d="M5 1.5 H15.5 V10 H4.5"/><line x1="9.5" y1="10" x2="9.5" y2="13"/><line x1="5.5" y1="13.5" x2="14" y2="13.5"/><rect x="1" y="1.5" width="3.5" height="4"/><line x1="2.7" y1="5.5" x2="2.7" y2="13.5"/></g></svg>
<svg class="a" style="left:1142px;top:692px" width="18" height="16" viewBox="0 0 18 16"><g fill="none" stroke="#fff" stroke-width="1.1"><path d="M1 5 H3.5 L7 1.5 V14.5 L3.5 11 H1Z"/><path d="M9.5 5.5 C10.8 7 10.8 9 9.5 10.5"/><path d="M12 3.5 C14 5.5 14 10.5 12 12.5"/><path d="M14.5 1.5 C17.5 4.5 17.5 11.5 14.5 14.5"/></g></svg>
<div class="t " style="left:1172px;top:684.84px;font-size:12px;line-height:12px;color:#fff;transform:scaleX(0.9310);transform-origin:0 0;">11:13 PM</div>
<div class="t " style="left:1169px;top:701.84px;font-size:12px;line-height:12px;color:#fff;transform:scaleX(0.9740);transform-origin:0 0;">6/21/2025</div>
<svg class="a" style="left:1239px;top:691px" width="17" height="17" viewBox="0 0 17 17"><path d="M0.6 0.6 H15.4 V12.4 H9.8 L8 15 L6.2 12.4 H0.6Z" fill="none" stroke="#fff" stroke-width="1.2"/></svg>
<div class="a" style="left:1275px;top:680px;width:1px;height:40px;background:#3a4550;"></div>
<svg class="a" style="left:0px;top:0px" width="1280" height="720" viewBox="0 0 1280 720"><g fill="none" stroke="rgba(215,230,255,.5)" stroke-width="2.8" stroke-linejoin="round" stroke-linecap="round"><path d="M1040.5 658.5 L1049 622.5 L1057.5 658.5 M1043.5 649.5 H1054.5"/><path d="M1064 658.5 V622.5 L1078.5 658.5 V622.5"/><path d="M1084 622.5 L1092.3 645 L1101 622.5 M1092.3 645 V658.5"/><path d="M1122 652 V614 Q1122 609.5 1126 612 L1161 633 Q1164 635 1160 638"/><path d="M1127 624.5 L1161 645 Q1164 647 1161 649 L1122 666"/><path d="M1117 617.5 Q1112 618 1112 623 V661 Q1112 664.5 1115 662.5 L1150 643"/><path d="M1173 658.5 V622.5 H1179 C1185 622.5 1186.5 627 1186.5 632 C1186.5 637 1184 641.4 1178 641.4 H1173 M1180 641.4 L1186.5 658.5"/><path d="M1194.2 622.5 V650 C1194.2 656 1197 658.5 1200.5 658.5 C1204 658.5 1206.7 656 1206.7 650 V622.5"/><path d="M1215 658.5 V622.5 L1229 658.5 V622.5"/></g></svg>
<div class="t " style="left:775px;width:500px;text-align:right;top:631.84px;font-size:12px;line-height:12px;color:#fff;transform:scaleX(0.9754);transform-origin:100% 0;">Test Mode</div>
<div class="t " style="left:775px;width:500px;text-align:right;top:646.84px;font-size:12px;line-height:12px;color:#fff;transform:scaleX(0.9614);transform-origin:100% 0;">Windows 10 Pro</div>
<div class="t " style="left:775px;width:500px;text-align:right;top:664.84px;font-size:12px;line-height:12px;color:#fff;transform:scaleX(0.9273);transform-origin:100% 0;">Build 19041.vb_release.191206-1406</div>
</body></html>
